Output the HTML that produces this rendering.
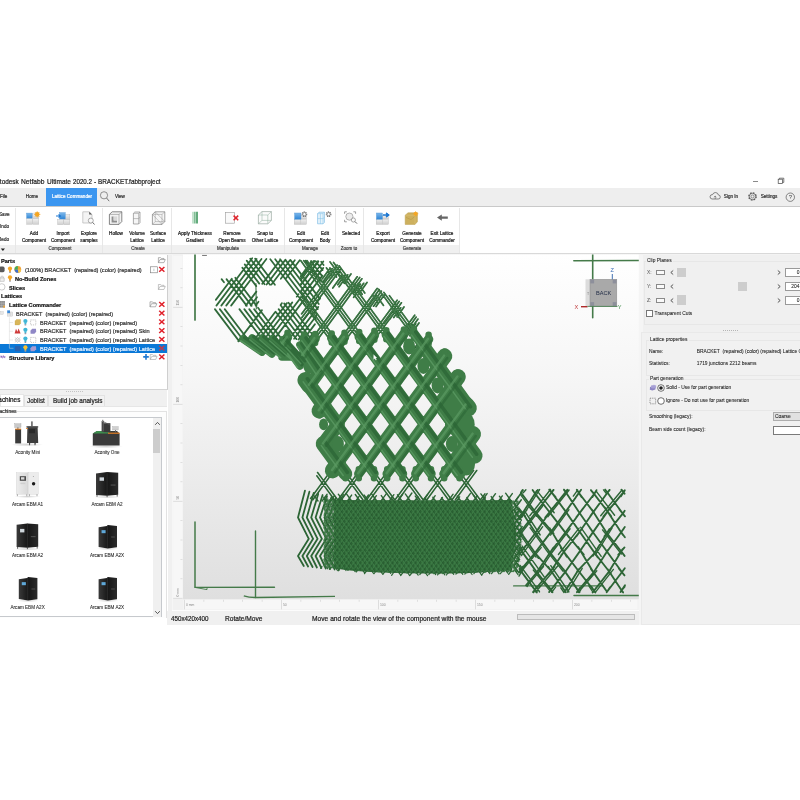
<!DOCTYPE html>
<html><head><meta charset="utf-8"><title>Autodesk Netfabb Ultimate 2020.2 - BRACKET.fabbproject</title>
<style>
html,body{margin:0;padding:0;background:#fff;}
body{width:800px;height:800px;position:relative;overflow:hidden;font-family:"Liberation Sans",sans-serif;}
.t{position:absolute;white-space:nowrap;line-height:1;-webkit-text-stroke:0.22px currentColor;}
.r{position:absolute;}
.rp .t{-webkit-text-stroke:0.07px currentColor;}
svg{overflow:visible}
</style></head><body><div id="app" style="position:absolute;left:0;top:0;width:800px;height:800px;will-change:transform;">
<div class="t" style="left:-8.3px;top:178px;font-size:7.6px;line-height:7.6px;color:#1a1a1a;font-weight:normal;transform-origin:0 50%;transform:scaleX(0.846);">Autodesk</div>
<div class="t" style="left:20.6px;top:178px;font-size:7.6px;line-height:7.6px;color:#1a1a1a;font-weight:normal;transform-origin:0 50%;transform:scaleX(0.879);">Netfabb</div>
<div class="t" style="left:46.5px;top:178px;font-size:7.6px;line-height:7.6px;color:#1a1a1a;font-weight:normal;transform-origin:0 50%;transform:scaleX(0.861);">Ultimate</div>
<div class="t" style="left:73px;top:178px;font-size:7.6px;line-height:7.6px;color:#1a1a1a;font-weight:normal;transform-origin:0 50%;transform:scaleX(0.818);">2020.2</div>
<div class="t" style="left:94.4px;top:178px;font-size:7.6px;line-height:7.6px;color:#1a1a1a;font-weight:normal;transform-origin:0 50%;transform:scaleX(0.869);">-</div>
<div class="t" style="left:98px;top:178px;font-size:7.6px;line-height:7.6px;color:#1a1a1a;font-weight:normal;transform-origin:0 50%;transform:scaleX(0.838);">BRACKET.fabbproject</div>
<div class="r" style="left:753.2px;top:180.7px;width:4.6px;height:0.7px;background:#8a8a8a;"></div>
<svg class="r" style="left:777px;top:177px" width="8" height="8" viewBox="0 0 8 8"><rect x="1.2" y="2.2" width="4.4" height="4.4" fill="none" stroke="#444" stroke-width="0.7"/><path d="M2.4 2.2 V1.2 H6.8 V5.4 H5.6" fill="none" stroke="#444" stroke-width="0.7"/></svg>
<div class="r" style="left:0px;top:187.5px;width:800px;height:18.2px;background:#eeeeee;"></div>
<div class="r" style="left:0px;top:205.5px;width:800px;height:0.8px;background:#c9c9c9;"></div>
<div class="r" style="left:46.3px;top:187.5px;width:50.4px;height:18.2px;background:#3b96f0;"></div>
<div class="t" style="left:0.2px;top:194px;font-size:5px;line-height:5px;color:#333;font-weight:normal;transform-origin:0 50%;transform:scaleX(0.92);">File</div>
<div class="t" style="left:31.5px;top:194px;font-size:5px;line-height:5px;color:#333;font-weight:normal;transform-origin:50% 50%;transform:translateX(-50%) scaleX(0.92);">Home</div>
<div class="t" style="left:71.5px;top:194px;font-size:5px;line-height:5px;color:#fff;font-weight:normal;transform-origin:50% 50%;transform:translateX(-50%) scaleX(0.92);">Lattice Commander</div>
<div class="t" style="left:120px;top:194px;font-size:5px;line-height:5px;color:#333;font-weight:normal;transform-origin:50% 50%;transform:translateX(-50%) scaleX(0.92);">View</div>
<svg class="r" style="left:99px;top:190px" width="12" height="13" viewBox="0 0 12 13"><circle cx="5" cy="5.3" r="3.6" fill="none" stroke="#666" stroke-width="0.7"/><path d="M7.6 8 L10.2 11.2" stroke="#666" stroke-width="0.9"/></svg>
<svg class="r" style="left:709px;top:191px" width="12" height="10" viewBox="0 0 12 10"><path d="M3 8 H9.2 A2 2 0 0 0 9.4 4 A3 3 0 0 0 3.6 3.6 A2.2 2.2 0 0 0 3 8 Z" fill="none" stroke="#555" stroke-width="0.7"/><path d="M6.2 8 V5 M5 6.2 L6.2 5 L7.4 6.2" fill="none" stroke="#555" stroke-width="0.6"/></svg>
<div class="t" style="left:731px;top:194px;font-size:5px;line-height:5px;color:#333;font-weight:normal;transform-origin:50% 50%;transform:translateX(-50%) scaleX(0.92);">Sign In</div>
<svg class="r" style="left:747px;top:191px" width="11" height="11" viewBox="0 0 11 11"><circle cx="5.5" cy="5.5" r="3.7" fill="none" stroke="#555" stroke-width="1.2" stroke-dasharray="1.6 1.3"/><circle cx="5.5" cy="5.5" r="3.2" fill="none" stroke="#555" stroke-width="0.7"/><circle cx="5.5" cy="5.5" r="1.5" fill="none" stroke="#555" stroke-width="0.6"/></svg>
<div class="t" style="left:768.5px;top:194px;font-size:5px;line-height:5px;color:#333;font-weight:normal;transform-origin:50% 50%;transform:translateX(-50%) scaleX(0.92);">Settings</div>
<svg class="r" style="left:785px;top:191.5px" width="11" height="11" viewBox="0 0 11 11"><circle cx="5.3" cy="5.2" r="4.2" fill="none" stroke="#555" stroke-width="0.7"/><text x="5.3" y="7.4" font-size="6" text-anchor="middle" fill="#444" font-family="Liberation Sans, sans-serif">?</text></svg>
<div class="r" style="left:0px;top:245px;width:459.5px;height:8px;background:#f0f0f0;"></div>
<div class="r" style="left:0px;top:253px;width:800px;height:1px;background:#d9d9d9;"></div>
<div class="r" style="left:0px;top:254px;width:800px;height:0.8px;background:#f3f3f3;"></div>
<div class="r" style="left:15.2px;top:207.5px;width:0.8px;height:45px;background:#e7e7e7;"></div>
<div class="r" style="left:102.1px;top:207.5px;width:0.8px;height:45px;background:#e7e7e7;"></div>
<div class="r" style="left:171.29999999999998px;top:207.5px;width:0.8px;height:45px;background:#e7e7e7;"></div>
<div class="r" style="left:283.6px;top:207.5px;width:0.8px;height:45px;background:#e7e7e7;"></div>
<div class="r" style="left:334.6px;top:207.5px;width:0.8px;height:45px;background:#e7e7e7;"></div>
<div class="r" style="left:363.3px;top:207.5px;width:0.8px;height:45px;background:#e7e7e7;"></div>
<div class="r" style="left:459.1px;top:207.5px;width:0.8px;height:45px;background:#e7e7e7;"></div>
<div class="t" style="left:-0.6px;top:212px;font-size:5px;line-height:5px;color:#333;font-weight:normal;transform-origin:0 50%;transform:scaleX(0.92);">Save</div>
<div class="t" style="left:-1.6px;top:224px;font-size:5px;line-height:5px;color:#333;font-weight:normal;transform-origin:0 50%;transform:scaleX(0.92);">Undo</div>
<div class="t" style="left:-1.6px;top:237px;font-size:5px;line-height:5px;color:#333;font-weight:normal;transform-origin:0 50%;transform:scaleX(0.92);">Redo</div>
<svg class="r" style="left:-0.5px;top:247.8px" width="6" height="4" viewBox="0 0 6 4"><path d="M0.8 0.6 L5 0.6 L2.9 3 Z" fill="#222"/></svg>
<div class="t" style="left:33.5px;top:231px;font-size:5px;line-height:5px;color:#1c1c1c;font-weight:normal;transform-origin:50% 50%;transform:translateX(-50%) scaleX(0.93);">Add</div>
<div class="t" style="left:33.5px;top:238px;font-size:5px;line-height:5px;color:#1c1c1c;font-weight:normal;transform-origin:50% 50%;transform:translateX(-50%) scaleX(0.93);">Component</div>
<div class="t" style="left:63px;top:231px;font-size:5px;line-height:5px;color:#1c1c1c;font-weight:normal;transform-origin:50% 50%;transform:translateX(-50%) scaleX(0.93);">Import</div>
<div class="t" style="left:63px;top:238px;font-size:5px;line-height:5px;color:#1c1c1c;font-weight:normal;transform-origin:50% 50%;transform:translateX(-50%) scaleX(0.93);">Component</div>
<div class="t" style="left:89px;top:231px;font-size:5px;line-height:5px;color:#1c1c1c;font-weight:normal;transform-origin:50% 50%;transform:translateX(-50%) scaleX(0.93);">Explore</div>
<div class="t" style="left:89px;top:238px;font-size:5px;line-height:5px;color:#1c1c1c;font-weight:normal;transform-origin:50% 50%;transform:translateX(-50%) scaleX(0.93);">samples</div>
<div class="t" style="left:115.5px;top:231px;font-size:5px;line-height:5px;color:#1c1c1c;font-weight:normal;transform-origin:50% 50%;transform:translateX(-50%) scaleX(0.93);">Hollow</div>
<div class="t" style="left:136.5px;top:231px;font-size:5px;line-height:5px;color:#1c1c1c;font-weight:normal;transform-origin:50% 50%;transform:translateX(-50%) scaleX(0.93);">Volume</div>
<div class="t" style="left:136.5px;top:238px;font-size:5px;line-height:5px;color:#1c1c1c;font-weight:normal;transform-origin:50% 50%;transform:translateX(-50%) scaleX(0.93);">Lattice</div>
<div class="t" style="left:158px;top:231px;font-size:5px;line-height:5px;color:#1c1c1c;font-weight:normal;transform-origin:50% 50%;transform:translateX(-50%) scaleX(0.93);">Surface</div>
<div class="t" style="left:158px;top:238px;font-size:5px;line-height:5px;color:#1c1c1c;font-weight:normal;transform-origin:50% 50%;transform:translateX(-50%) scaleX(0.93);">Lattice</div>
<div class="t" style="left:195px;top:231px;font-size:5px;line-height:5px;color:#1c1c1c;font-weight:normal;transform-origin:50% 50%;transform:translateX(-50%) scaleX(0.93);">Apply Thickness</div>
<div class="t" style="left:195px;top:238px;font-size:5px;line-height:5px;color:#1c1c1c;font-weight:normal;transform-origin:50% 50%;transform:translateX(-50%) scaleX(0.93);">Gradient</div>
<div class="t" style="left:231.5px;top:231px;font-size:5px;line-height:5px;color:#1c1c1c;font-weight:normal;transform-origin:50% 50%;transform:translateX(-50%) scaleX(0.93);">Remove</div>
<div class="t" style="left:231.5px;top:238px;font-size:5px;line-height:5px;color:#1c1c1c;font-weight:normal;transform-origin:50% 50%;transform:translateX(-50%) scaleX(0.93);">Open Beams</div>
<div class="t" style="left:265px;top:231px;font-size:5px;line-height:5px;color:#1c1c1c;font-weight:normal;transform-origin:50% 50%;transform:translateX(-50%) scaleX(0.93);">Snap to</div>
<div class="t" style="left:265px;top:238px;font-size:5px;line-height:5px;color:#1c1c1c;font-weight:normal;transform-origin:50% 50%;transform:translateX(-50%) scaleX(0.93);">Other Lattice</div>
<div class="t" style="left:301.2px;top:231px;font-size:5px;line-height:5px;color:#1c1c1c;font-weight:normal;transform-origin:50% 50%;transform:translateX(-50%) scaleX(0.93);">Edit</div>
<div class="t" style="left:301.2px;top:238px;font-size:5px;line-height:5px;color:#1c1c1c;font-weight:normal;transform-origin:50% 50%;transform:translateX(-50%) scaleX(0.93);">Component</div>
<div class="t" style="left:324.5px;top:231px;font-size:5px;line-height:5px;color:#1c1c1c;font-weight:normal;transform-origin:50% 50%;transform:translateX(-50%) scaleX(0.93);">Edit</div>
<div class="t" style="left:324.5px;top:238px;font-size:5px;line-height:5px;color:#1c1c1c;font-weight:normal;transform-origin:50% 50%;transform:translateX(-50%) scaleX(0.93);">Body</div>
<div class="t" style="left:350.7px;top:231px;font-size:5px;line-height:5px;color:#1c1c1c;font-weight:normal;transform-origin:50% 50%;transform:translateX(-50%) scaleX(0.93);">Selected</div>
<div class="t" style="left:382.5px;top:231px;font-size:5px;line-height:5px;color:#1c1c1c;font-weight:normal;transform-origin:50% 50%;transform:translateX(-50%) scaleX(0.93);">Export</div>
<div class="t" style="left:382.5px;top:238px;font-size:5px;line-height:5px;color:#1c1c1c;font-weight:normal;transform-origin:50% 50%;transform:translateX(-50%) scaleX(0.93);">Component</div>
<div class="t" style="left:412px;top:231px;font-size:5px;line-height:5px;color:#1c1c1c;font-weight:normal;transform-origin:50% 50%;transform:translateX(-50%) scaleX(0.93);">Generate</div>
<div class="t" style="left:412px;top:238px;font-size:5px;line-height:5px;color:#1c1c1c;font-weight:normal;transform-origin:50% 50%;transform:translateX(-50%) scaleX(0.93);">Component</div>
<div class="t" style="left:442px;top:231px;font-size:5px;line-height:5px;color:#1c1c1c;font-weight:normal;transform-origin:50% 50%;transform:translateX(-50%) scaleX(0.93);">Exit Lattice</div>
<div class="t" style="left:442px;top:238px;font-size:5px;line-height:5px;color:#1c1c1c;font-weight:normal;transform-origin:50% 50%;transform:translateX(-50%) scaleX(0.93);">Commander</div>
<div class="t" style="left:60px;top:247px;font-size:4.8px;line-height:4.8px;color:#444;font-weight:normal;transform-origin:50% 50%;transform:translateX(-50%) scaleX(0.93);">Component</div>
<div class="t" style="left:137.5px;top:247px;font-size:4.8px;line-height:4.8px;color:#444;font-weight:normal;transform-origin:50% 50%;transform:translateX(-50%) scaleX(0.93);">Create</div>
<div class="t" style="left:228px;top:247px;font-size:4.8px;line-height:4.8px;color:#444;font-weight:normal;transform-origin:50% 50%;transform:translateX(-50%) scaleX(0.93);">Manipulate</div>
<div class="t" style="left:310px;top:247px;font-size:4.8px;line-height:4.8px;color:#444;font-weight:normal;transform-origin:50% 50%;transform:translateX(-50%) scaleX(0.93);">Manage</div>
<div class="t" style="left:349px;top:247px;font-size:4.8px;line-height:4.8px;color:#444;font-weight:normal;transform-origin:50% 50%;transform:translateX(-50%) scaleX(0.93);">Zoom to</div>
<div class="t" style="left:412px;top:247px;font-size:4.8px;line-height:4.8px;color:#444;font-weight:normal;transform-origin:50% 50%;transform:translateX(-50%) scaleX(0.93);">Generate</div>
<svg class="r" style="left:0;top:0" width="800" height="800" viewBox="0 0 800 800">
<defs>
<linearGradient id="cb" x1="0" y1="0" x2="0" y2="1"><stop offset="0" stop-color="#7db7ea"/><stop offset="1" stop-color="#2f86d6"/></linearGradient>
<linearGradient id="cg" x1="0" y1="0" x2="0" y2="1"><stop offset="0" stop-color="#f1f1f1"/><stop offset="1" stop-color="#cfcfcf"/></linearGradient>
</defs>
<rect x="26.6" y="213.1" width="6.0" height="5.5" fill="url(#cb)" stroke="#4a93d8" stroke-width="0.4"/>
<rect x="26.6" y="218.79999999999998" width="6.0" height="5.5" fill="url(#cg)" stroke="#bdbdbd" stroke-width="0.4"/>
<rect x="32.800000000000004" y="213.1" width="6.0" height="5.5" fill="url(#cg)" stroke="#bdbdbd" stroke-width="0.4"/>
<rect x="32.800000000000004" y="218.79999999999998" width="6.0" height="5.5" fill="url(#cg)" stroke="#bdbdbd" stroke-width="0.4"/>
<circle cx="37.2" cy="214.4" r="2.3" fill="#f5a623"/><path d="M37.2 211.2 V217.6 M34 214.4 H40.4 M35 212.2 L39.4 216.6 M39.4 212.2 L35 216.6" stroke="#f5a623" stroke-width="0.7"/>
<rect x="57.6" y="219.2" width="6.0" height="5.5" fill="url(#cg)" stroke="#b8b8b8" stroke-width="0.4"/>
<rect x="63.8" y="219.2" width="6.0" height="5.5" fill="url(#cg)" stroke="#b8b8b8" stroke-width="0.4"/>
<rect x="63.8" y="214.4" width="6.0" height="4.8" fill="url(#cg)" stroke="#b8b8b8" stroke-width="0.4"/>
<rect x="59.6" y="212.6" width="5.6" height="6.4" fill="url(#cb)" stroke="#4a93d8" stroke-width="0.4"/>
<path d="M56 216 H60.2 M58.6 214.4 L60.4 216 L58.6 217.6" stroke="#1f78d1" stroke-width="1.1" fill="none"/>
<path d="M82.8 211.8 H89.2 L92 214.6 V223 H82.8 Z" fill="#f4f4f4" stroke="#a8a8a8" stroke-width="0.6"/><path d="M89.2 211.8 V214.6 H92 Z" fill="#555"/>
<circle cx="90.8" cy="220.6" r="2.5" fill="#fafafa" stroke="#777" stroke-width="0.6"/><path d="M92.6 222.5 L94.6 224.4" stroke="#555" stroke-width="0.9"/>
<path d="M109.4 214.4 L112.2 211.8 H121.8 V221.6 L119 224.4 H109.4 Z" fill="#f3f3f3" stroke="#555" stroke-width="0.7" stroke-linejoin="round"/>
<path d="M109.4 214.4 H119 V224.4 M119 214.4 L121.8 211.8" fill="none" stroke="#777" stroke-width="0.5"/>
<path d="M111.6 216.4 H113.6 V220.4 H117 V222.4 H111.6 Z" fill="#8e8e8e"/><rect x="113.6" y="216.4" width="3.6" height="4" fill="#d9d9d9"/>
<path d="M133.4 213.4 L134.8 212 H140 V222.6 L138.6 224 H133.4 Z" fill="#f6f6f6" stroke="#777" stroke-width="0.6"/>
<path d="M133.4 213.4 H138.6 V224 M138.6 213.4 L140 212 M133.4 218.6 H138.6 L140 217.4" fill="none" stroke="#888" stroke-width="0.5"/>
<path d="M152.4 214.4 L155.2 211.8 H164.8 V221.6 L162 224.4 H152.4 Z" fill="#f6f6f6" stroke="#666" stroke-width="0.6" stroke-linejoin="round"/>
<path d="M152.4 214.4 H162 V224.4 M162 214.4 L164.8 211.8 M152.4 214.4 L162 224.4 M155.2 211.8 L164.8 221.6 M155.2 211.8 V221.6 H164.8 M152.4 224.4 L155.2 221.6" fill="none" stroke="#888" stroke-width="0.45"/>
<path d="M193 211.8 V223.6" stroke="#58b074" stroke-width="0.7"/><path d="M194.9 211.8 V223.6" stroke="#3f9c5e" stroke-width="1.1"/><path d="M197 211.8 V223.6" stroke="#2f8f50" stroke-width="1.5"/>
<rect x="225.4" y="212.6" width="9.2" height="10.6" fill="#fafafa" stroke="#9a9a9a" stroke-width="0.6"/>
<path d="M233.6 215.6 L238.2 220.2 M238.2 215.6 L233.6 220.2" stroke="#e0242c" stroke-width="1.5"/>
<path d="M258.4 215 L262 211.6 H271.4 V220.4 L267.8 223.8 H258.4 Z" fill="#fbfbfb" stroke="#8a9a92" stroke-width="0.6" stroke-linejoin="round"/>
<path d="M258.4 215 H267.8 V223.8 M267.8 215 L271.4 211.6 M262 211.6 V220.4 H271.4 M258.4 223.8 L262 220.4" fill="none" stroke="#8fae9c" stroke-width="0.5"/>
<rect x="294.2" y="219.0" width="6.0" height="5.3" fill="url(#cg)" stroke="#b8b8b8" stroke-width="0.4"/>
<rect x="300.4" y="219.0" width="6.0" height="5.3" fill="url(#cg)" stroke="#b8b8b8" stroke-width="0.4"/>
<rect x="300.4" y="215.4" width="6.0" height="3.6" fill="url(#cg)" stroke="#b8b8b8" stroke-width="0.4"/>
<rect x="294.6" y="213.0" width="6.4" height="6.2" fill="url(#cb)" stroke="#4a93d8" stroke-width="0.4"/>
<circle cx="304.4" cy="214.2" r="2.1" fill="none" stroke="#777" stroke-width="1.5" stroke-dasharray="1 0.65"/><circle cx="304.4" cy="214.2" r="1.7" fill="#fafafa" stroke="#777" stroke-width="0.8"/>
<path d="M317.6 213.6 L319 212.2 H324.4 V222.4 L323 223.8 H317.6 Z" fill="#e6f3fb" stroke="#6db4e0" stroke-width="0.6"/>
<path d="M317.6 213.6 H323 V223.8 M323 213.6 L324.4 212.2 M317.6 218.6 H323 L324.4 217.4 M320.4 213.6 V223.8" fill="none" stroke="#7fc0e6" stroke-width="0.5"/>
<circle cx="328.6" cy="214.2" r="2.1" fill="none" stroke="#777" stroke-width="1.5" stroke-dasharray="1 0.65"/><circle cx="328.6" cy="214.2" r="1.7" fill="#fafafa" stroke="#777" stroke-width="0.8"/>
<path d="M344.6 213.8 V211.8 H346.8 M353.4 211.8 H355.6 V213.8 M344.6 219.8 V221.8 H346.8" fill="none" stroke="#777" stroke-width="0.7"/>
<circle cx="349.4" cy="216.6" r="3.6" fill="#ececec" stroke="#888" stroke-width="0.6"/><circle cx="353.4" cy="220" r="2.1" fill="#fafafa" stroke="#777" stroke-width="0.6"/><path d="M355 221.6 L357 223.6" stroke="#555" stroke-width="0.9"/>
<rect x="376.2" y="219.0" width="6.0" height="5.3" fill="url(#cg)" stroke="#b8b8b8" stroke-width="0.4"/>
<rect x="382.4" y="219.0" width="6.0" height="5.3" fill="url(#cg)" stroke="#b8b8b8" stroke-width="0.4"/>
<rect x="382.4" y="215.6" width="6.0" height="3.4" fill="url(#cg)" stroke="#b8b8b8" stroke-width="0.4"/>
<rect x="376.4" y="213.0" width="6.0" height="6.2" fill="url(#cb)" stroke="#4a93d8" stroke-width="0.4"/>
<path d="M383 215 H387.6 M386 213 L388.6 215 L386 217" stroke="#1f78d1" stroke-width="1.3" fill="none"/><path d="M386.4 212.6 L389.6 215 L386.4 217.4 Z" fill="#1f78d1"/>
<path d="M405.2 215.2 L408 212.8 H417.4 V221.8 L415 224.4 H405.2 Z" fill="#cdb05e" stroke="#b89a48" stroke-width="0.5" stroke-linejoin="round"/>
<path d="M405.2 215.2 H415 V224.4 M415 215.2 L417.4 212.8" fill="none" stroke="#ddc57a" stroke-width="0.5"/><path d="M406 217.4 L411 219.6 L414.6 216.6" fill="none" stroke="#b39443" stroke-width="0.5"/>
<circle cx="415.6" cy="213.8" r="1.9" fill="#f5a623"/><path d="M415.6 211 V216.6 M412.8 213.8 H418.4 M413.8 212 L417.4 215.6 M417.4 212 L413.8 215.6" stroke="#f5a623" stroke-width="0.6"/>
<path d="M437 217.6 L441.8 214.4 V216.5 H447.8 V218.7 H441.8 V220.8 Z" fill="#666"/>
</svg>
<div class="r" style="left:0px;top:254.8px;width:168px;height:135.5px;background:#fff;border-right:0.8px solid #cfcfcf;border-bottom:0.8px solid #d5d5d5;box-sizing:border-box"></div>
<div class="r" style="left:168px;top:254.8px;width:4.4px;height:370px;background:#f0f0f0;"></div>
<div class="r" style="left:0px;top:344.2px;width:166.5px;height:8.8px;background:#0a78d7;"></div>
<div class="t" style="left:1px;top:258px;font-size:6.2px;line-height:6.2px;color:#111;font-weight:bold;transform-origin:0 50%;transform:scaleX(0.905);">Parts</div>
<div class="t" style="left:25px;top:267px;font-size:6.2px;line-height:6.2px;color:#333;font-weight:normal;transform-origin:0 50%;transform:scaleX(0.905);">(100%) BRACKET&nbsp; (repaired) (color) (repaired)</div>
<div class="t" style="left:15px;top:276px;font-size:6.2px;line-height:6.2px;color:#111;font-weight:bold;transform-origin:0 50%;transform:scaleX(0.905);">No-Build Zones</div>
<div class="t" style="left:8.5px;top:285px;font-size:6.2px;line-height:6.2px;color:#111;font-weight:bold;transform-origin:0 50%;transform:scaleX(0.905);">Slices</div>
<div class="t" style="left:1px;top:293px;font-size:6.2px;line-height:6.2px;color:#111;font-weight:bold;transform-origin:0 50%;transform:scaleX(0.905);">Lattices</div>
<div class="t" style="left:8.5px;top:302px;font-size:6.2px;line-height:6.2px;color:#111;font-weight:bold;transform-origin:0 50%;transform:scaleX(0.905);">Lattice Commander</div>
<div class="t" style="left:16px;top:311px;font-size:6.2px;line-height:6.2px;color:#333;font-weight:normal;transform-origin:0 50%;transform:scaleX(0.905);">BRACKET&nbsp; (repaired) (color) (repaired)</div>
<div class="t" style="left:40px;top:320px;font-size:6.2px;line-height:6.2px;color:#333;font-weight:normal;transform-origin:0 50%;transform:scaleX(0.905);">BRACKET&nbsp; (repaired) (color) (repaired)</div>
<div class="t" style="left:40px;top:328px;font-size:6.2px;line-height:6.2px;color:#333;font-weight:normal;transform-origin:0 50%;transform:scaleX(0.905);">BRACKET&nbsp; (repaired) (color) (repaired) Skin</div>
<div class="t" style="left:40px;top:337px;font-size:6.2px;line-height:6.2px;color:#333;font-weight:normal;transform-origin:0 50%;transform:scaleX(0.905);">BRACKET&nbsp; (repaired) (color) (repaired) Lattice</div>
<div class="t" style="left:40px;top:346px;font-size:6.2px;line-height:6.2px;color:#e8f2ff;font-weight:normal;transform-origin:0 50%;transform:scaleX(0.905);">BRACKET&nbsp; (repaired) (color) (repaired) Lattice</div>
<div class="t" style="left:8.5px;top:355px;font-size:6.2px;line-height:6.2px;color:#111;font-weight:bold;transform-origin:0 50%;transform:scaleX(0.905);">Structure Library</div>
<svg class="r" style="left:0;top:0" width="800" height="800" viewBox="0 0 800 800">
<path d="M158.4 262.65 V257.65 H160.6 L161.4 258.45 H164.0 V259.45 M158.4 262.65 L160.0 259.55 H165.3 L163.9 262.65 Z" fill="#fdfdfd" stroke="#777" stroke-width="0.55" stroke-linejoin="round"/>
<rect x="-1" y="266.6" width="5.6" height="5.6" rx="1.6" fill="#5a5a5a"/>
<circle cx="10" cy="268.5" r="2.1" fill="#f5a728"/><path d="M8.9 270.09999999999997 H11.1 L10.8 271.9 H9.2 Z" fill="#f5a728"/><rect x="9.2" y="271.7" width="1.6" height="1.3" fill="#9a9aa8"/>
<circle cx="17.8" cy="269.4" r="3.4" fill="#f1a33a"/><path d="M17.8 269.4 L17.8 266.0 A3.4 3.4 0 0 0 14.5 269.8 Z" fill="#3fae58"/><path d="M17.8 269.4 L14.5 269.8 A3.4 3.4 0 0 0 18.6 272.7 Z" fill="#3b6fd0"/><path d="M17.8 269.4 L18.6 272.7 A3.4 3.4 0 0 0 21.2 269.6 Z" fill="#f2c84b"/>
<rect x="150.4" y="266.8" width="7" height="6" fill="#fff" stroke="#777" stroke-width="0.6"/><path d="M153.9 268.6 V271.0" stroke="#9aa" stroke-width="0.6"/>
<path d="M159.20000000000002 267.0 L164.4 271.79999999999995 M164.4 267.0 L159.20000000000002 271.79999999999995" stroke="#e0202a" stroke-width="1.5" fill="none"/>
<path d="M0 281.35 V277.95 H4.2 V281.35 Z M0.8 277.95 V276.75 Q2 275.15 3.4 276.75 V277.95" fill="#f0f0f0" stroke="#b5b5b5" stroke-width="0.6"/>
<circle cx="10" cy="277.25" r="2.1" fill="#f5a728"/><path d="M8.9 278.84999999999997 H11.1 L10.8 280.65 H9.2 Z" fill="#f5a728"/><rect x="9.2" y="280.45" width="1.6" height="1.3" fill="#9a9aa8"/>
<circle cx="1.8" cy="286.9" r="3.2" fill="#fff" stroke="#aaa" stroke-width="0.6"/>
<path d="M158.4 289.49999999999994 V284.49999999999994 H160.6 L161.4 285.29999999999995 H164.0 V286.29999999999995 M158.4 289.49999999999994 L160.0 286.4 H165.3 L163.9 289.49999999999994 Z" fill="#fdfdfd" stroke="#999" stroke-width="0.55" stroke-linejoin="round"/>
<rect x="-0.5" y="301.0" width="5.4" height="6.6" fill="#8a8a8a"/><path d="M1.3 301.0 V307.6 M3.1 301.0 V307.6 M-0.5 303.2 H4.9 M-0.5 305.4 H4.9" stroke="#c9c9c9" stroke-width="0.4"/><rect x="3.2" y="305.6" width="1.8" height="2" fill="#e8a33a"/>
<path d="M150.0 306.79999999999995 V301.79999999999995 H152.2 L153.0 302.59999999999997 H155.6 V303.59999999999997 M150.0 306.79999999999995 L151.6 303.7 H156.9 L155.5 306.79999999999995 Z" fill="#fdfdfd" stroke="#777" stroke-width="0.55" stroke-linejoin="round"/>
<path d="M159.20000000000002 302.0 L164.4 306.79999999999995 M164.4 302.0 L159.20000000000002 306.79999999999995" stroke="#e0202a" stroke-width="1.5" fill="none"/>
<rect x="0.6" y="311.75" width="2.6" height="2.6" fill="#e6e6e6" stroke="#c2c2c2" stroke-width="0.4"/>
<rect x="7.2" y="310.35" width="2.8" height="3" fill="#3c8ad8"/><rect x="7.2" y="313.55" width="2.8" height="2.6" fill="#e4e4e4" stroke="#b8b8b8" stroke-width="0.3"/><rect x="10.2" y="311.95" width="2.6" height="4.2" fill="#e4e4e4" stroke="#b8b8b8" stroke-width="0.3"/>
<path d="M159.20000000000002 310.75 L164.4 315.54999999999995 M164.4 310.75 L159.20000000000002 315.54999999999995" stroke="#e0202a" stroke-width="1.5" fill="none"/>
<path d="M9.4 317.25 V348.25 H13.5 M9.4 322.5 H13 M9.4 331.25 H13 M9.4 340.0 H13" stroke="#d6d6d6" stroke-width="0.5" fill="none"/>
<path d="M15 320.9 L16.4 319.5 H20.6 V323.5 L19.2 324.9 H15 Z" fill="#d9b65a" stroke="#c3a046" stroke-width="0.3"/>
<circle cx="25.4" cy="321.0" r="2.1" fill="#3fb6d6"/><path d="M24.299999999999997 322.59999999999997 H26.5 L26.2 324.4 H24.599999999999998 Z" fill="#3fb6d6"/><rect x="24.599999999999998" y="324.2" width="1.6" height="1.3" fill="#9a9aa8"/>
<rect x="30.6" y="319.9" width="5.2" height="5" fill="none" stroke="#8a8a8a" stroke-width="0.5" stroke-dasharray="1.1 0.9"/>
<path d="M159.20000000000002 319.5 L164.4 324.29999999999995 M164.4 319.5 L159.20000000000002 324.29999999999995" stroke="#e0202a" stroke-width="1.5" fill="none"/>
<path d="M14.6 333.45 L16 328.65 L17.4 331.65 L18.6 328.45 L20.6 333.45 Z" fill="#cf3a3a"/>
<circle cx="25.4" cy="329.75" r="2.1" fill="#3fb6d6"/><path d="M24.299999999999997 331.34999999999997 H26.5 L26.2 333.15 H24.599999999999998 Z" fill="#3fb6d6"/><rect x="24.599999999999998" y="332.95" width="1.6" height="1.3" fill="#9a9aa8"/>
<path d="M30.4 330.65 L32.2 328.65 H36 L36.2 331.85 L34.4 333.65 H30.6 Z" fill="#8f87c6"/>
<path d="M159.20000000000002 328.25 L164.4 333.04999999999995 M164.4 328.25 L159.20000000000002 333.04999999999995" stroke="#e0202a" stroke-width="1.5" fill="none"/>
<path d="M14.8 337.4 L20.4 342.4 M14.8 339.8 L17.8 342.4 M17.4 337.4 L20.4 340.2 M20.4 337.4 L14.8 342.4 M17.8 337.4 L14.8 340.2 M20.4 339.8 L17.4 342.4" stroke="#aaa" stroke-width="0.5" fill="none"/>
<circle cx="25.4" cy="338.5" r="2.1" fill="#3fb6d6"/><path d="M24.299999999999997 340.09999999999997 H26.5 L26.2 341.9 H24.599999999999998 Z" fill="#3fb6d6"/><rect x="24.599999999999998" y="341.7" width="1.6" height="1.3" fill="#9a9aa8"/>
<rect x="30.6" y="337.4" width="5.2" height="5" fill="none" stroke="#8a8a8a" stroke-width="0.5" stroke-dasharray="1.1 0.9"/>
<path d="M159.20000000000002 337.0 L164.4 341.79999999999995 M164.4 337.0 L159.20000000000002 341.79999999999995" stroke="#e0202a" stroke-width="1.5" fill="none"/>
<path d="M15 346.15 H20.4 V351.15 H15 Z" fill="#2c5fa8" opacity="0.9"/>
<circle cx="25.4" cy="347.25" r="2.1" fill="#f7c232"/><path d="M24.299999999999997 348.84999999999997 H26.5 L26.2 350.65 H24.599999999999998 Z" fill="#f7c232"/><rect x="24.599999999999998" y="350.45" width="1.6" height="1.3" fill="#9a9aa8"/>
<path d="M30.4 348.15 L32.2 346.15 H36 L36.2 349.35 L34.4 351.15 H30.6 Z" fill="#a79ad0"/>
<path d="M159.20000000000002 345.75 L164.4 350.55 M164.4 345.75 L159.20000000000002 350.55" stroke="#c23a4a" stroke-width="1.5" fill="none"/>
<path d="M0 356.9 H5.6 M1 355.5 L2.4 358.3 M3.2 355.3 L4.6 358.1" stroke="#7a4fb0" stroke-width="0.7" fill="none"/>
<path d="M146 354.1 V359.7 M143.2 356.9 H148.8" stroke="#1f78d1" stroke-width="1.6" fill="none"/>
<path d="M150.2 359.49999999999994 V354.49999999999994 H152.39999999999998 L153.2 355.29999999999995 H155.79999999999998 V356.29999999999995 M150.2 359.49999999999994 L151.79999999999998 356.4 H157.1 L155.7 359.49999999999994 Z" fill="#fdfdfd" stroke="#999" stroke-width="0.55" stroke-linejoin="round"/>
<path d="M159.20000000000002 354.5 L164.4 359.29999999999995 M164.4 354.5 L159.20000000000002 359.29999999999995" stroke="#e0202a" stroke-width="1.5" fill="none"/>
</svg>
<div class="r" style="left:0px;top:390.3px;width:167.3px;height:235px;background:#f0f0f0;"></div>
<div class="r" style="left:0px;top:617.8px;width:167.3px;height:8px;background:#ffffff;"></div>
<div class="r" style="left:0px;top:406px;width:167px;height:0.8px;background:#e6e6e6;"></div>
<div class="r" style="left:66px;top:391.4px;width:16.5px;height:0.8px;background:transparent;border-top:0.8px dotted #c4c4c4"></div>
<div class="r" style="left:0px;top:393.6px;width:24.3px;height:12.8px;background:#fff;border:0.8px solid #e6e6e6;border-bottom:none;box-sizing:border-box"></div>
<div class="r" style="left:24.3px;top:395px;width:23.5px;height:11px;background:#f2f2f2;border:0.8px solid #e2e2e2;border-bottom:none;box-sizing:border-box"></div>
<div class="r" style="left:47.8px;top:395px;width:57px;height:11px;background:#f2f2f2;border:0.8px solid #e2e2e2;border-bottom:none;box-sizing:border-box"></div>
<div class="t" style="left:-7.4px;top:396px;font-size:7.2px;line-height:7.2px;color:#111;font-weight:normal;transform-origin:0 50%;transform:scaleX(0.89);">Machines</div>
<div class="t" style="left:26.75px;top:397px;font-size:7.2px;line-height:7.2px;color:#222;font-weight:normal;transform-origin:0 50%;transform:scaleX(0.871);">Joblist</div>
<div class="t" style="left:53px;top:397px;font-size:7.2px;line-height:7.2px;color:#222;font-weight:normal;transform-origin:0 50%;transform:scaleX(0.891);">Build job analysis</div>
<div class="r" style="left:0px;top:406.8px;width:167px;height:211px;background:#fdfdfd;"></div>
<div class="r" style="left:16px;top:411.2px;width:150px;height:0.8px;background:#e2e2e2;"></div>
<div class="r" style="left:165.6px;top:411.2px;width:0.8px;height:207px;background:#e2e2e2;"></div>
<div class="t" style="left:-4.6px;top:410px;font-size:4.9px;line-height:4.9px;color:#333;font-weight:normal;">Machines</div>
<div class="r" style="left:-1px;top:417.4px;width:163.2px;height:200px;background:#fff;border:0.8px solid #c6c9cd;box-sizing:border-box"></div>
<div class="r" style="left:152.6px;top:418.2px;width:8.8px;height:198.4px;background:#f0f0f0;"></div>
<div class="r" style="left:153.4px;top:428.6px;width:7px;height:24px;background:#cdcdcd;"></div>
<svg class="r" style="left:153.5px;top:420.5px" width="7" height="5" viewBox="0 0 7 5"><path d="M1.2 3.8 L3.5 1.4 L5.8 3.8" fill="none" stroke="#444" stroke-width="0.9"/></svg>
<svg class="r" style="left:153.5px;top:609.5px" width="7" height="5" viewBox="0 0 7 5"><path d="M1.2 1.2 L3.5 3.6 L5.8 1.2" fill="none" stroke="#444" stroke-width="0.9"/></svg>
<div class="t" style="left:27.6px;top:451px;font-size:4.6px;line-height:4.6px;color:#2a2a2a;font-weight:normal;transform-origin:50% 50%;transform:translateX(-50%);-webkit-text-stroke:0.08px currentColor;">Aconity Mini</div>
<div class="t" style="left:107px;top:451px;font-size:4.6px;line-height:4.6px;color:#2a2a2a;font-weight:normal;transform-origin:50% 50%;transform:translateX(-50%);-webkit-text-stroke:0.08px currentColor;">Aconity One</div>
<div class="t" style="left:27.6px;top:503px;font-size:4.6px;line-height:4.6px;color:#2a2a2a;font-weight:normal;transform-origin:50% 50%;transform:translateX(-50%);-webkit-text-stroke:0.08px currentColor;">Arcam EBM A1</div>
<div class="t" style="left:107px;top:503px;font-size:4.6px;line-height:4.6px;color:#2a2a2a;font-weight:normal;transform-origin:50% 50%;transform:translateX(-50%);-webkit-text-stroke:0.08px currentColor;">Arcam EBM A2</div>
<div class="t" style="left:27.6px;top:554px;font-size:4.6px;line-height:4.6px;color:#2a2a2a;font-weight:normal;transform-origin:50% 50%;transform:translateX(-50%);-webkit-text-stroke:0.08px currentColor;">Arcam EBM A2</div>
<div class="t" style="left:107px;top:554px;font-size:4.6px;line-height:4.6px;color:#2a2a2a;font-weight:normal;transform-origin:50% 50%;transform:translateX(-50%);-webkit-text-stroke:0.08px currentColor;">Arcam EBM A2X</div>
<div class="t" style="left:27.6px;top:606px;font-size:4.6px;line-height:4.6px;color:#2a2a2a;font-weight:normal;transform-origin:50% 50%;transform:translateX(-50%);-webkit-text-stroke:0.08px currentColor;">Arcam EBM A2X</div>
<div class="t" style="left:107px;top:606px;font-size:4.6px;line-height:4.6px;color:#2a2a2a;font-weight:normal;transform-origin:50% 50%;transform:translateX(-50%);-webkit-text-stroke:0.08px currentColor;">Arcam EBM A2X</div>
<svg class="r" style="left:0;top:0" width="800" height="800" viewBox="0 0 800 800">
<defs><linearGradient id="blk" x1="0" y1="0" x2="1" y2="0"><stop offset="0" stop-color="#3a3a3a"/><stop offset="0.5" stop-color="#161616"/><stop offset="1" stop-color="#2b2b2b"/></linearGradient>
<linearGradient id="wht" x1="0" y1="0" x2="1" y2="0"><stop offset="0" stop-color="#ededed"/><stop offset="1" stop-color="#d9d9d9"/></linearGradient>
<radialGradient id="shd"><stop offset="0" stop-color="#000" stop-opacity="0.18"/><stop offset="1" stop-color="#000" stop-opacity="0"/></radialGradient></defs>
<ellipse cx="27" cy="444.6" rx="16" ry="2" fill="url(#shd)"/>
<rect x="14.8" y="423.8" width="6.2" height="3.6" fill="#c9c9c9" stroke="#8a8a8a" stroke-width="0.3"/><rect x="17.4" y="427.4" width="1" height="1.6" fill="#666"/>
<rect x="15.2" y="429" width="5.9" height="14.4" fill="#3b3b3b"/><rect x="15.2" y="428.6" width="5.9" height="1.1" fill="#e57f22"/>
<path d="M27.4 426.6 H37.6 L38.2 443 H35.8 L35.4 445.2 H34.6 L34.4 443 H30.2 L30 445.2 H29.2 L29 443 H27 Z" fill="#3d3d3d"/><rect x="31" y="421.4" width="1.8" height="5.4" fill="#777"/><rect x="26.4" y="426.2" width="11.8" height="1.4" fill="#555"/><rect x="29" y="429" width="6" height="4.2" fill="#2a2a2a"/><rect x="26.2" y="428" width="1.6" height="1" fill="#e57f22"/>
<ellipse cx="106" cy="446.4" rx="17" ry="2" fill="url(#shd)"/>
<path d="M92.8 433.4 L97 431 H117 L119.6 433.4 V445.4 H92.8 Z" fill="#3a3a3a"/><path d="M92.8 433.4 L97 431 H111 L108 433.4 Z" fill="#3c8f4e"/><rect x="108" y="432.6" width="11.6" height="1.2" fill="#e57f22"/>
<rect x="101.6" y="421" width="2.2" height="11" fill="#4a4a4a"/><rect x="103.6" y="423.2" width="6.8" height="9" fill="#3a3a3a"/><path d="M102 421 L110 425" stroke="#555" stroke-width="0.8"/><rect x="102" y="419.8" width="1.4" height="2" fill="#888"/>
<rect x="112.6" y="426.6" width="5.6" height="3.4" fill="#d0d0d0" stroke="#999" stroke-width="0.3"/><rect x="115" y="430" width="0.9" height="2.4" fill="#666"/>
<ellipse cx="27.4" cy="496.6" rx="13" ry="1.4" fill="url(#shd)"/>
<rect x="16.4" y="472.8" width="11.6" height="21.4" fill="url(#wht)" stroke="#c4c4c4" stroke-width="0.3"/><rect x="28.4" y="472.8" width="9.8" height="21.4" fill="#ececec" stroke="#c4c4c4" stroke-width="0.3"/>
<rect x="19.8" y="476.2" width="6.2" height="4.6" fill="#4a4a4a"/><rect x="21" y="477.2" width="3.4" height="2.4" fill="#d8d8d8"/><rect x="20.4" y="482.6" width="5" height="1.6" fill="#cfcfcf"/>
<circle cx="33.6" cy="483.8" r="1.7" fill="#1a1a1a"/><circle cx="33.4" cy="476.6" r="0.5" fill="#999"/>
<path d="M17.4 494.2 V496.2 M26.8 494.2 V496.2 M29.4 494.2 V496.2 M37 494.2 V496.2" stroke="#8a8a8a" stroke-width="0.7"/>
<ellipse cx="107.1" cy="497.0" rx="13.764" ry="1.4" fill="url(#shd)"/>
<path d="M96 473.4 L107.1 472 L118.2 472.8 V494.79999999999995 L107.1 495.79999999999995 L96 495.0 Z" fill="url(#blk)"/>
<path d="M107.1 472 V495.59999999999997" stroke="#4a4a4a" stroke-width="0.4"/>
<rect x="99.552" y="477.368" width="4.44" height="3.416" fill="#cfd6dc"/>
<rect x="110.652" y="484.688" width="4.8839999999999995" height="0.7" fill="#6a6a6a"/>
<path d="M97 495.0 V496.79999999999995 M107.1 495.59999999999997 V497.2 M117.2 494.79999999999995 V496.59999999999997" stroke="#222" stroke-width="0.7"/>
<ellipse cx="27.400000000000002" cy="549.0" rx="13.392000000000001" ry="1.4" fill="url(#shd)"/>
<path d="M16.6 524.8 L27.400000000000002 523.4 L38.2 524.1999999999999 V546.8 L27.400000000000002 547.8 L16.6 547.0 Z" fill="url(#blk)"/>
<path d="M27.400000000000002 523.4 V547.6" stroke="#4a4a4a" stroke-width="0.4"/>
<rect x="20.056" y="528.9" width="4.32" height="3.5000000000000004" fill="#cfd6dc"/>
<rect x="30.856" y="536.4" width="4.752000000000001" height="0.7" fill="#6a6a6a"/>
<path d="M17.6 547.0 V548.8 M27.400000000000002 547.6 V549.1999999999999 M37.2 546.8 V548.6" stroke="#222" stroke-width="0.7"/>
<ellipse cx="107.8" cy="548.8" rx="11.408" ry="1.2" fill="url(#shd)"/>
<path d="M98.6 527.2 L106.88 526 L107.8 525 L117.0 526 V547.1999999999999 L107.8 548.4 L98.6 547.0 Z" fill="url(#blk)"/>
<path d="M107.43199999999999 525.6 V548.0" stroke="#4a4a4a" stroke-width="0.4"/>
<rect x="101.544" y="530.148" width="4.048" height="3.042" fill="#5fa8d8"/>
<rect x="111.112" y="536.7" width="3.6799999999999997" height="0.6" fill="#6a6a6a"/>
<ellipse cx="28.1" cy="600.8" rx="11.532" ry="1.2" fill="url(#shd)"/>
<path d="M18.8 579.2 L27.17 578 L28.1 577 L37.400000000000006 578 V599.1999999999999 L28.1 600.4 L18.8 599.0 Z" fill="url(#blk)"/>
<path d="M27.728 577.6 V600.0" stroke="#4a4a4a" stroke-width="0.4"/>
<rect x="21.776" y="582.148" width="4.0920000000000005" height="3.042" fill="#5fa8d8"/>
<rect x="31.448" y="588.7" width="3.7200000000000006" height="0.6" fill="#6a6a6a"/>
<ellipse cx="107.8" cy="600.8" rx="11.408" ry="1.2" fill="url(#shd)"/>
<path d="M98.6 579.2 L106.88 578 L107.8 577 L117.0 578 V599.1999999999999 L107.8 600.4 L98.6 599.0 Z" fill="url(#blk)"/>
<path d="M107.43199999999999 577.6 V600.0" stroke="#4a4a4a" stroke-width="0.4"/>
<rect x="101.544" y="582.148" width="4.048" height="3.042" fill="#5fa8d8"/>
<rect x="111.112" y="588.7" width="3.6799999999999997" height="0.6" fill="#6a6a6a"/>
</svg>
<svg class="r" style="left:0;top:0" width="800" height="800" viewBox="0 0 800 800">
<defs>
<linearGradient id="bg" x1="0" y1="0" x2="0" y2="1"><stop offset="0" stop-color="#ffffff"/><stop offset="0.35" stop-color="#f6f6f6"/><stop offset="1" stop-color="#dfdfdf"/></linearGradient>
<clipPath id="vc"><rect x="183" y="254.6" width="455.8" height="344.6"/></clipPath>
</defs>
<rect x="172.4" y="254.6" width="466.4" height="355.6" fill="#f1f1f1"/>
<rect x="183" y="254.6" width="455.79999999999995" height="344.6" fill="url(#bg)"/>
<rect x="173.2" y="255.6" width="9.3" height="343" fill="#f7f7f7"/>
<rect x="183.5" y="599.8" width="454" height="9.6" fill="#f7f7f7"/>
<rect x="184.20" y="599.8" width="0.7" height="9.6" fill="#d2d2d2"/>
<text x="185.90" y="605.6" font-size="3.4" fill="#8a8a8a" font-family="Liberation Sans, sans-serif">0 mm</text>
<rect x="203.60" y="599.8" width="0.6" height="2" fill="#cfcfcf"/>
<rect x="223.00" y="599.8" width="0.6" height="2" fill="#cfcfcf"/>
<rect x="242.40" y="599.8" width="0.6" height="2" fill="#cfcfcf"/>
<rect x="261.80" y="599.8" width="0.6" height="2" fill="#cfcfcf"/>
<rect x="281.20" y="599.8" width="0.7" height="9.6" fill="#d2d2d2"/>
<text x="282.90" y="605.6" font-size="3.4" fill="#8a8a8a" font-family="Liberation Sans, sans-serif">50</text>
<rect x="300.60" y="599.8" width="0.6" height="2" fill="#cfcfcf"/>
<rect x="320.00" y="599.8" width="0.6" height="2" fill="#cfcfcf"/>
<rect x="339.40" y="599.8" width="0.6" height="2" fill="#cfcfcf"/>
<rect x="358.80" y="599.8" width="0.6" height="2" fill="#cfcfcf"/>
<rect x="378.20" y="599.8" width="0.7" height="9.6" fill="#d2d2d2"/>
<text x="379.90" y="605.6" font-size="3.4" fill="#8a8a8a" font-family="Liberation Sans, sans-serif">100</text>
<rect x="397.60" y="599.8" width="0.6" height="2" fill="#cfcfcf"/>
<rect x="417.00" y="599.8" width="0.6" height="2" fill="#cfcfcf"/>
<rect x="436.40" y="599.8" width="0.6" height="2" fill="#cfcfcf"/>
<rect x="455.80" y="599.8" width="0.6" height="2" fill="#cfcfcf"/>
<rect x="475.20" y="599.8" width="0.7" height="9.6" fill="#d2d2d2"/>
<text x="476.90" y="605.6" font-size="3.4" fill="#8a8a8a" font-family="Liberation Sans, sans-serif">150</text>
<rect x="494.60" y="599.8" width="0.6" height="2" fill="#cfcfcf"/>
<rect x="514.00" y="599.8" width="0.6" height="2" fill="#cfcfcf"/>
<rect x="533.40" y="599.8" width="0.6" height="2" fill="#cfcfcf"/>
<rect x="552.80" y="599.8" width="0.6" height="2" fill="#cfcfcf"/>
<rect x="572.20" y="599.8" width="0.7" height="9.6" fill="#d2d2d2"/>
<text x="573.90" y="605.6" font-size="3.4" fill="#8a8a8a" font-family="Liberation Sans, sans-serif">200</text>
<rect x="591.60" y="599.8" width="0.6" height="2" fill="#cfcfcf"/>
<rect x="611.00" y="599.8" width="0.6" height="2" fill="#cfcfcf"/>
<rect x="630.40" y="599.8" width="0.6" height="2" fill="#cfcfcf"/>
<rect x="173.2" y="597.90" width="9.3" height="0.7" fill="#d2d2d2"/>
<text transform="translate(179.3,596.60) rotate(-90)" font-size="3.4" fill="#8a8a8a" font-family="Liberation Sans, sans-serif">0 mm</text>
<rect x="180.4" y="578.50" width="2.1" height="0.6" fill="#cfcfcf"/>
<rect x="180.4" y="559.10" width="2.1" height="0.6" fill="#cfcfcf"/>
<rect x="180.4" y="539.70" width="2.1" height="0.6" fill="#cfcfcf"/>
<rect x="180.4" y="520.30" width="2.1" height="0.6" fill="#cfcfcf"/>
<rect x="173.2" y="500.90" width="9.3" height="0.7" fill="#d2d2d2"/>
<text transform="translate(179.3,499.60) rotate(-90)" font-size="3.4" fill="#8a8a8a" font-family="Liberation Sans, sans-serif">50</text>
<rect x="180.4" y="481.50" width="2.1" height="0.6" fill="#cfcfcf"/>
<rect x="180.4" y="462.10" width="2.1" height="0.6" fill="#cfcfcf"/>
<rect x="180.4" y="442.70" width="2.1" height="0.6" fill="#cfcfcf"/>
<rect x="180.4" y="423.30" width="2.1" height="0.6" fill="#cfcfcf"/>
<rect x="173.2" y="403.90" width="9.3" height="0.7" fill="#d2d2d2"/>
<text transform="translate(179.3,402.60) rotate(-90)" font-size="3.4" fill="#8a8a8a" font-family="Liberation Sans, sans-serif">100</text>
<rect x="180.4" y="384.50" width="2.1" height="0.6" fill="#cfcfcf"/>
<rect x="180.4" y="365.10" width="2.1" height="0.6" fill="#cfcfcf"/>
<rect x="180.4" y="345.70" width="2.1" height="0.6" fill="#cfcfcf"/>
<rect x="180.4" y="326.30" width="2.1" height="0.6" fill="#cfcfcf"/>
<rect x="173.2" y="306.90" width="9.3" height="0.7" fill="#d2d2d2"/>
<text transform="translate(179.3,305.60) rotate(-90)" font-size="3.4" fill="#8a8a8a" font-family="Liberation Sans, sans-serif">150</text>
<rect x="180.4" y="287.50" width="2.1" height="0.6" fill="#cfcfcf"/>
<rect x="180.4" y="268.10" width="2.1" height="0.6" fill="#cfcfcf"/>
<g clip-path="url(#vc)">
<path d="M195 254 L195 320" stroke="#447a49" stroke-width="1.7" fill="none" stroke-linecap="round"/>
<path d="M195 522 L195 587" stroke="#447a49" stroke-width="1.5" fill="none" stroke-linecap="round"/>
<path d="M195 587.4 L274.5 587.2" stroke="#447a49" stroke-width="1.4" fill="none" stroke-linecap="round"/>
<path d="M196 587.6 L207 589.6 L207 588" stroke="#447a49" stroke-width="0.9" fill="none"/>
<path d="M255.5 531 L255.5 597.6" stroke="#447a49" stroke-width="1.4" fill="none" stroke-linecap="round"/>
<path d="M243.8 595.8 Q249 597.6 256 597.5 L335 596.4" stroke="#447a49" stroke-width="1.3" fill="none"/>
<path d="M513.6 585.9 L603 585.9" stroke="#447a49" stroke-width="1.3" fill="none" stroke-linecap="round"/>
<path d="M574 595.6 L639 595.6" stroke="#447a49" stroke-width="1.5" fill="none" stroke-linecap="round"/>
<path d="M573.8 260.8 L639 260.6" stroke="#447a49" stroke-width="1.5" fill="none" stroke-linecap="round"/>
<path d="M592.7 254 L592.7 317.7" stroke="#447a49" stroke-width="1.6" fill="none" stroke-linecap="round"/>
<path d="M202.5 255.4 L206.5 255.4" stroke="#6f6f6f" stroke-width="1.0" fill="none" stroke-linecap="round"/>
<path d="M215.8 299.9L231.8 278.8M216.4 305.6L252.2 258.3M214.9 309.1L239.1 341.1M221.3 305.6L256.6 259.0M219.8 309.1L244.5 341.7M226.2 305.6L261.5 259.0M224.7 309.1L249.9 342.3M231.1 305.6L266.4 259.0M239.4 309.1L265.1 343.0M245.8 305.6L256.4 291.6M262.2 283.9L280.6 259.6M221.6 279.1L224.0 282.3M244.3 309.1L269.0 341.7M250.7 305.6L257.0 297.3M266.6 284.5L285.5 259.6M226.5 279.1L246.8 305.9M249.2 309.1L272.9 340.4M255.6 305.6L258.5 301.8M271.5 284.5L289.9 260.2M231.4 279.1L251.7 305.9M254.1 309.1L276.9 339.1M280.8 278.8L294.8 260.2M235.3 277.8L256.6 305.9M258.0 307.8L280.8 337.9M238.3 341.4L262.0 310.1M285.7 278.8L299.7 260.2M242.3 267.6L256.3 286.1M275.6 311.7L296.5 339.1M252.0 342.7L275.2 312.0M280.6 305.0L282.0 303.1M300.4 278.8L314.0 260.9M244.7 264.4L259.3 283.6M278.6 309.1L301.8 339.8M256.4 343.3L286.9 303.1M300.5 285.2L318.4 261.5M246.7 260.6L264.6 284.2M280.6 305.3L306.3 339.1M261.3 343.3L292.3 302.4M296.7 296.7L298.6 294.1M300.0 292.2L323.3 261.5M250.2 258.6L270.0 284.8M284.1 303.4L310.7 338.5M267.2 342.0L323.3 267.9M255.1 258.6L274.9 284.8M288.5 302.7L312.7 334.7M273.5 340.1L322.4 275.6M270.3 259.3L315.8 319.3M289.7 338.2L320.2 297.9M275.2 259.3L316.8 314.2M294.1 338.8L318.3 306.9M280.1 259.3L317.8 309.1M298.5 339.5L316.4 315.8M285.4 259.9L318.8 304.0M303.4 339.5L315.0 324.1M290.3 259.9L319.9 298.9M308.8 338.8L313.2 333.1M305.5 260.6L321.5 281.6M310.9 261.2L322.0 275.9M315.8 261.2L322.6 270.1M321.2 261.8L323.6 265.0" stroke="#30693a" stroke-width="1.75" fill="none" stroke-linecap="round" opacity="1"/>
<path d="M255.9 283.5L256.3 309.0" stroke="#2c6535" stroke-width="1.0" fill="none" stroke-linecap="round" opacity="1"/>
<path d="M303.7 260.6L309.4 268.4M306.9 260.6L312.6 268.4M300.7 260.6L306.4 268.4M300.8 280.1L309.4 268.4M300.7 284.6L312.6 268.4M300.7 276.2L306.4 268.4M301.3 296.3L309.4 307.4M301.2 291.8L312.6 307.4M301.1 300.2L306.4 307.4M301.8 317.8L309.4 307.4M301.6 322.3L312.6 307.4M301.6 313.9L306.4 307.4M302.2 336.6L304.6 339.9M302.1 332.1L307.8 339.9M309.4 268.4L314.6 261.2M312.6 268.4L317.8 261.2M306.4 268.4L311.6 261.2M309.4 268.4L323.6 287.9M312.6 268.4L326.8 287.9M306.4 268.4L320.6 287.9M309.4 307.4L323.6 287.9M312.6 307.4L326.8 287.9M306.4 307.4L320.6 287.9M309.4 307.4L323.6 326.9M312.6 307.4L326.8 326.9M306.4 307.4L320.6 326.9M314.6 339.2L323.6 326.9M317.8 339.2L326.8 326.9M311.6 339.2L320.6 326.9M333.6 262.5L337.9 268.4M339.2 265.8L341.1 268.4M330.1 261.9L334.9 268.4M323.6 287.9L337.9 268.4M326.8 287.9L341.1 268.4M320.6 287.9L334.9 268.4M323.6 287.9L337.9 307.4M326.8 287.9L341.1 307.4M320.6 287.9L334.9 307.4M323.6 326.9L337.9 307.4M326.8 326.9L341.1 307.4M320.6 326.9L334.9 307.4M323.6 326.9L332.6 339.2M326.8 326.9L335.8 339.2M320.6 326.9L329.6 339.2M337.9 268.4L339.3 266.4M334.9 268.4L337.2 265.1M337.9 268.4L352.1 287.9M341.1 268.4L355.3 287.9M334.9 268.4L349.1 287.9M337.9 307.4L352.1 287.9M341.1 307.4L355.3 287.9M334.9 307.4L349.1 287.9M337.9 307.4L352.1 326.9M341.1 307.4L355.3 326.9M334.9 307.4L349.1 326.9M343.1 339.2L352.1 326.9M346.8 338.6L355.3 326.9M340.1 339.2L349.1 326.9M352.1 287.9L359.7 277.5M355.3 287.9L361.9 278.8M349.1 287.9L357.2 276.8M352.1 287.9L366.4 307.4M355.3 287.9L369.6 307.4M349.1 287.9L363.4 307.4M352.1 326.9L366.4 307.4M355.3 326.9L369.6 307.4M349.1 326.9L363.4 307.4M352.1 326.9L360.7 338.6M355.3 326.9L363.9 338.6M349.1 326.9L357.7 338.6M366.4 307.4L379.2 289.8M369.6 307.4L381.4 291.1M363.4 307.4L377.1 288.5M366.4 307.4L380.6 326.9M369.6 307.4L383.8 326.9M363.4 307.4L377.6 326.9M372.1 338.6L380.6 326.9M375.2 338.6L383.8 326.9M369.1 338.6L377.6 326.9M383.9 292.4L394.9 307.4M389.5 295.7L398.1 307.4M378.6 289.2L391.9 307.4M380.6 326.9L394.9 307.4M383.8 326.9L398.1 307.4M377.6 326.9L391.9 307.4M380.6 326.9L388.7 337.9M383.8 326.9L391.9 337.9M377.6 326.9L385.7 337.9M394.9 307.4L399.1 301.5M398.1 307.4L401.4 302.8M391.9 307.4L397.1 300.2M394.9 307.4L409.1 326.9M398.1 307.4L412.3 326.9M391.9 307.4L406.1 326.9M401.0 337.9L409.1 326.9M404.2 337.9L412.3 326.9M398.0 337.9L406.1 326.9M409.1 326.9L416.2 317.1M412.3 326.9L418.0 319.1M406.1 326.9L414.7 315.2M409.1 326.9L417.2 337.9M412.3 326.9L419.9 337.3M406.1 326.9L414.2 337.9M339.0 267.0L331.2 277.9M335.7 267.8L328.6 277.7M332.4 268.6L323.2 281.5M329.1 269.4L322.4 278.8M330.0 268.0L336.5 277.1M326.5 268.0L332.5 276.5M351.0 274.0L344.3 283.3M347.7 274.8L339.1 286.8M344.4 275.6L337.8 284.8M341.1 276.4L332.8 288.0M342.0 275.0L347.2 282.3M338.5 275.0L343.8 282.4M367.0 282.5L358.8 294.0M363.7 283.3L353.7 297.3M360.4 284.1L353.4 293.8M357.1 284.9L349.7 295.2M358.0 283.5L364.8 293.0M354.5 283.5L362.2 294.3M385.0 294.0L376.1 306.5M381.7 294.8L373.6 306.2M378.4 295.6L367.8 310.5M375.1 296.4L368.5 305.7M376.0 295.0L383.5 305.4M372.5 295.0L378.3 303.2M404.0 307.0L397.0 316.9M400.7 307.8L393.8 317.5M397.4 308.6L389.6 319.5M394.1 309.4L384.2 323.3M395.0 308.0L400.5 315.7M391.5 308.0L398.2 317.3M419.0 323.0L409.8 335.8M415.7 323.8L407.7 335.0M412.4 324.6L403.6 336.9M409.1 325.4L402.4 334.8M410.0 324.0L415.2 331.2M406.5 324.0L412.1 331.8M430.0 338.0L420.7 351.1M426.7 338.8L418.4 350.4M423.4 339.6L415.6 350.5M420.1 340.4L411.2 352.9M421.0 339.0L427.3 347.8M417.5 339.0L423.4 347.2" stroke="#2c6535" stroke-width="1.7" fill="none" stroke-linecap="round" opacity="1"/>
<path d="M303.4 260.4L309.1 268.2M306.6 260.4L312.2 268.2M300.4 260.4L306.1 268.2M300.5 279.9L309.1 268.2M300.4 284.4L312.2 268.2M300.4 276.0L306.1 268.2M301.0 296.1L309.1 307.2M300.9 291.6L312.2 307.2M300.8 300.1L306.1 307.2M301.4 317.6L309.1 307.2M301.3 322.1L312.2 307.2M301.3 313.7L306.1 307.2M301.9 336.4L304.3 339.7M301.8 331.9L307.5 339.7M309.1 268.2L314.3 261.1M312.2 268.2L317.5 261.1M306.1 268.2L311.3 261.1M309.1 268.2L323.3 287.7M312.2 268.2L326.5 287.7M306.1 268.2L320.3 287.7M309.1 307.2L323.3 287.7M312.2 307.2L326.5 287.7M306.1 307.2L320.3 287.7M309.1 307.2L323.3 326.7M312.2 307.2L326.5 326.7M306.1 307.2L320.3 326.7M314.3 339.1L323.3 326.7M317.5 339.1L326.5 326.7M311.3 339.1L320.3 326.7M333.3 262.3L337.6 268.2M338.9 265.6L340.8 268.2M329.8 261.7L334.6 268.2M323.3 287.7L337.6 268.2M326.5 287.7L340.8 268.2M320.3 287.7L334.6 268.2M323.3 287.7L337.6 307.2M326.5 287.7L340.8 307.2M320.3 287.7L334.6 307.2M323.3 326.7L337.6 307.2M326.5 326.7L340.8 307.2M320.3 326.7L334.6 307.2M323.3 326.7L332.3 339.1M326.5 326.7L335.5 339.1M320.3 326.7L329.3 339.1M337.6 268.2L339.0 266.2M334.6 268.2L336.9 264.9M337.6 268.2L351.8 287.7M340.8 268.2L355.0 287.7M334.6 268.2L348.8 287.7M337.6 307.2L351.8 287.7M340.8 307.2L355.0 287.7M334.6 307.2L348.8 287.7M337.6 307.2L351.8 326.7M340.8 307.2L355.0 326.7M334.6 307.2L348.8 326.7M342.8 339.1L351.8 326.7M346.4 338.4L355.0 326.7M339.8 339.1L348.8 326.7M351.8 287.7L359.4 277.3M355.0 287.7L361.6 278.6M348.8 287.7L356.9 276.6M351.8 287.7L366.1 307.2M355.0 287.7L369.2 307.2M348.8 287.7L363.1 307.2M351.8 326.7L366.1 307.2M355.0 326.7L369.2 307.2M348.8 326.7L363.1 307.2M351.8 326.7L360.4 338.4M355.0 326.7L363.6 338.4M348.8 326.7L357.4 338.4M366.1 307.2L378.9 289.6M369.2 307.2L381.1 290.9M363.1 307.2L376.8 288.3M366.1 307.2L380.3 326.7M369.2 307.2L383.5 326.7M363.1 307.2L377.3 326.7M371.8 338.4L380.3 326.7M374.9 338.4L383.5 326.7M368.8 338.4L377.3 326.7M383.6 292.2L394.6 307.2M389.2 295.5L397.8 307.2M378.2 289.0L391.6 307.2M380.3 326.7L394.6 307.2M383.5 326.7L397.8 307.2M377.3 326.7L391.6 307.2M380.3 326.7L388.4 337.8M383.5 326.7L391.6 337.8M377.3 326.7L385.4 337.8M394.6 307.2L398.8 301.3M397.8 307.2L401.1 302.6M391.6 307.2L396.8 300.1M394.6 307.2L408.8 326.7M397.8 307.2L412.0 326.7M391.6 307.2L405.8 326.7M400.7 337.8L408.8 326.7M403.9 337.8L412.0 326.7M397.7 337.8L405.8 326.7M408.8 326.7L415.9 316.9M412.0 326.7L417.7 318.9M405.8 326.7L414.4 315.0M408.8 326.7L416.9 337.8M412.0 326.7L419.6 337.1M405.8 326.7L413.9 337.8M338.7 266.8L330.9 277.7M335.4 267.6L328.3 277.5M332.1 268.4L322.9 281.3M328.8 269.2L322.1 278.6M329.7 267.8L336.2 276.9M326.2 267.8L332.2 276.3M350.7 273.8L344.0 283.1M347.4 274.6L338.8 286.6M344.1 275.4L337.5 284.6M340.8 276.2L332.5 287.8M341.7 274.8L346.9 282.1M338.2 274.8L343.5 282.2M366.7 282.3L358.5 293.8M363.4 283.1L353.4 297.1M360.1 283.9L353.1 293.6M356.8 284.7L349.4 295.0M357.7 283.3L364.5 292.8M354.2 283.3L361.9 294.1M384.7 293.8L375.8 306.3M381.4 294.6L373.3 306.0M378.1 295.4L367.5 310.3M374.8 296.2L368.2 305.5M375.7 294.8L383.2 305.2M372.2 294.8L378.0 303.0M403.7 306.8L396.7 316.7M400.4 307.6L393.5 317.3M397.1 308.4L389.3 319.3M393.8 309.2L383.9 323.1M394.7 307.8L400.2 315.5M391.2 307.8L397.9 317.1M418.7 322.8L409.5 335.6M415.4 323.6L407.4 334.8M412.1 324.4L403.3 336.7M408.8 325.2L402.1 334.6M409.7 323.8L414.9 331.0M406.2 323.8L411.8 331.6M429.7 337.8L420.4 350.9M426.4 338.6L418.1 350.2M423.1 339.4L415.3 350.3M419.8 340.2L410.9 352.7M420.7 338.8L427.0 347.6M417.2 338.8L423.1 347.0" stroke="#4a8752" stroke-width="0.6" fill="none" stroke-linecap="round" opacity="1"/>
<path d="M316.8 475.8L322.0 482.9M317.6 472.5L325.2 482.9M310.6 498.5L322.0 482.9M312.9 499.8L325.2 482.9M322.0 482.9L331.0 470.5M325.2 482.9L334.2 470.5M322.0 482.9L334.4 499.8M325.2 482.9L337.6 499.8M341.5 470.5L350.5 482.9M344.7 470.5L353.7 482.9M338.1 499.8L350.5 482.9M341.4 499.8L353.7 482.9M350.5 482.9L359.5 470.5M353.7 482.9L362.7 470.5M350.5 482.9L362.9 499.8M353.7 482.9L366.1 499.8M370.0 470.5L379.0 482.9M373.2 470.5L382.2 482.9M366.6 499.8L379.0 482.9M369.9 499.8L382.2 482.9M379.0 482.9L388.0 470.5M382.2 482.9L391.2 470.5M379.0 482.9L391.4 499.8M382.2 482.9L394.6 499.8M398.5 470.5L407.5 482.9M401.7 470.5L410.7 482.9M395.1 499.8L407.5 482.9M398.4 499.8L410.7 482.9M407.5 482.9L416.5 470.5M410.7 482.9L419.7 470.5M407.5 482.9L419.9 499.8M410.7 482.9L423.1 499.8M427.0 470.5L436.0 482.9M430.2 470.5L439.2 482.9M423.6 499.8L436.0 482.9M426.9 499.8L439.2 482.9M436.0 482.9L445.0 470.5M439.2 482.9L448.2 470.5M436.0 482.9L448.4 499.8M439.2 482.9L451.6 499.8M455.5 470.5L464.5 482.9M458.7 470.5L467.7 482.9M452.1 499.8L464.5 482.9M455.4 499.8L467.7 482.9M464.5 482.9L473.5 470.5M467.7 482.9L476.7 470.5M464.5 482.9L476.9 499.8M467.7 482.9L480.1 499.8M480.6 499.8L484.9 493.9M483.9 499.8L485.3 497.8" stroke="#2c6535" stroke-width="1.6" fill="none" stroke-linecap="round" opacity="1"/>
<path d="M305.6 380.2L309.4 385.4" stroke="#3f7d47" stroke-width="16.3" fill="none" stroke-linecap="round" opacity="1"/>
<path d="M309.4 385.4L323.6 365.9" stroke="#3f7d47" stroke-width="12.4" fill="none" stroke-linecap="round" opacity="1"/>
<path d="M309.4 385.4L323.6 404.9" stroke="#3f7d47" stroke-width="15.0" fill="none" stroke-linecap="round" opacity="1"/>
<path d="M319.3 410.8L323.6 404.9" stroke="#3f7d47" stroke-width="15.5" fill="none" stroke-linecap="round" opacity="1"/>
<path d="M323.6 404.9L337.9 385.4" stroke="#3f7d47" stroke-width="10.6" fill="none" stroke-linecap="round" opacity="1"/>
<path d="M323.6 404.9L337.9 424.4" stroke="#3f7d47" stroke-width="13.3" fill="none" stroke-linecap="round" opacity="1"/>
<path d="M323.6 443.9L337.9 424.4" stroke="#3f7d47" stroke-width="13.9" fill="none" stroke-linecap="round" opacity="1"/>
<path d="M323.6 443.9L337.9 463.4" stroke="#3f7d47" stroke-width="15.7" fill="none" stroke-linecap="round" opacity="1"/>
<path d="M332.6 470.5L337.9 463.4" stroke="#3f7d47" stroke-width="15.6" fill="none" stroke-linecap="round" opacity="1"/>
<path d="M337.9 463.4L352.1 443.9" stroke="#3f7d47" stroke-width="11.3" fill="none" stroke-linecap="round" opacity="1"/>
<path d="M337.9 463.4L345.5 473.8" stroke="#3f7d47" stroke-width="13.5" fill="none" stroke-linecap="round" opacity="1"/>
<path d="M409.1 365.9L423.4 346.4" stroke="#3f7d47" stroke-width="10.6" fill="none" stroke-linecap="round" opacity="1"/>
<path d="M423.4 346.4L437.6 365.9" stroke="#3f7d47" stroke-width="13.7" fill="none" stroke-linecap="round" opacity="1"/>
<path d="M423.4 385.4L437.6 365.9" stroke="#3f7d47" stroke-width="10.3" fill="none" stroke-linecap="round" opacity="1"/>
<path d="M437.6 365.9L444.7 356.1" stroke="#3f7d47" stroke-width="15.2" fill="none" stroke-linecap="round" opacity="1"/>
<path d="M437.6 365.9L451.9 385.4" stroke="#3f7d47" stroke-width="13.8" fill="none" stroke-linecap="round" opacity="1"/>
<path d="M437.6 404.9L451.9 385.4" stroke="#3f7d47" stroke-width="11.3" fill="none" stroke-linecap="round" opacity="1"/>
<path d="M437.6 404.9L451.9 424.4" stroke="#3f7d47" stroke-width="9.9" fill="none" stroke-linecap="round" opacity="1"/>
<path d="M444.2 473.8L451.9 463.4" stroke="#3f7d47" stroke-width="9.5" fill="none" stroke-linecap="round" opacity="1"/>
<path d="M451.9 385.4L458.0 376.9" stroke="#3f7d47" stroke-width="15.5" fill="none" stroke-linecap="round" opacity="1"/>
<path d="M451.9 385.4L466.1 404.9" stroke="#3f7d47" stroke-width="15.2" fill="none" stroke-linecap="round" opacity="1"/>
<path d="M451.9 424.4L466.1 404.9" stroke="#3f7d47" stroke-width="13.9" fill="none" stroke-linecap="round" opacity="1"/>
<path d="M451.9 424.4L466.1 443.9" stroke="#3f7d47" stroke-width="12.8" fill="none" stroke-linecap="round" opacity="1"/>
<path d="M451.9 463.4L466.1 443.9" stroke="#3f7d47" stroke-width="12.4" fill="none" stroke-linecap="round" opacity="1"/>
<path d="M451.9 463.4L459.5 473.8" stroke="#3f7d47" stroke-width="11.6" fill="none" stroke-linecap="round" opacity="1"/>
<path d="M466.1 404.9L468.5 408.1" stroke="#3f7d47" stroke-width="16.6" fill="none" stroke-linecap="round" opacity="1"/>
<path d="M466.1 443.9L473.2 434.1" stroke="#3f7d47" stroke-width="15.6" fill="none" stroke-linecap="round" opacity="1"/>
<path d="M466.1 443.9L474.7 455.6" stroke="#3f7d47" stroke-width="15.7" fill="none" stroke-linecap="round" opacity="1"/>
<path d="M282.8 343.8L287.5 337.3M304.1 339.2L309.4 346.4M302.7 355.5L309.4 346.4M305.6 380.2L309.4 385.4M309.4 346.4L315.1 338.6M309.4 346.4L323.6 365.9M309.4 385.4L323.6 365.9M309.4 385.4L323.6 404.9M319.3 410.8L323.6 404.9M331.7 337.9L337.9 346.4M323.6 365.9L337.9 346.4M323.6 365.9L337.9 385.4M323.6 404.9L337.9 385.4M323.6 404.9L337.9 424.4M323.6 443.9L337.9 424.4M323.6 443.9L337.9 463.4M332.6 470.5L337.9 463.4M337.9 346.4L344.5 337.3M337.9 346.4L352.1 365.9M337.9 385.4L352.1 365.9M337.9 385.4L352.1 404.9M337.9 424.4L352.1 404.9M337.9 424.4L352.1 443.9M337.9 463.4L352.1 443.9M337.9 463.4L345.5 473.8M359.2 336.6L366.4 346.4M352.1 365.9L366.4 346.4M352.1 365.9L366.4 385.4M352.1 404.9L366.4 385.4M352.1 404.9L366.4 424.4M352.1 443.9L366.4 424.4M352.1 443.9L366.4 463.4M358.8 473.8L366.4 463.4M366.4 346.4L374.4 335.3M366.4 346.4L380.6 365.9M366.4 385.4L380.6 365.9M366.4 385.4L380.6 404.9M366.4 424.4L380.6 404.9M366.4 424.4L380.6 443.9M366.4 463.4L380.6 443.9M366.4 463.4L374.0 473.8M386.3 334.7L394.9 346.4M380.6 365.9L394.9 346.4M380.6 365.9L394.9 385.4M380.6 404.9L394.9 385.4M380.6 404.9L394.9 424.4M380.6 443.9L394.9 424.4M380.6 443.9L394.9 463.4M387.2 473.8L394.9 463.4M394.9 346.4L403.9 334.0M394.9 346.4L409.1 365.9M394.9 385.4L409.1 365.9M394.9 385.4L409.1 404.9M394.9 424.4L409.1 404.9M394.9 424.4L409.1 443.9M394.9 463.4L409.1 443.9M394.9 463.4L402.5 473.8M413.9 333.4L423.4 346.4M409.1 365.9L423.4 346.4M409.1 365.9L423.4 385.4M409.1 404.9L423.4 385.4M409.1 404.9L423.4 424.4M409.1 443.9L423.4 424.4M409.1 443.9L423.4 463.4M415.8 473.8L423.4 463.4M423.4 346.4L428.6 339.2M423.4 346.4L437.6 365.9M423.4 385.4L437.6 365.9M423.4 385.4L437.6 404.9M423.4 424.4L437.6 404.9M423.4 424.4L437.6 443.9M423.4 463.4L437.6 443.9M423.4 463.4L431.0 473.8M437.6 365.9L444.7 356.1M437.6 365.9L451.9 385.4M437.6 404.9L451.9 385.4M437.6 404.9L451.9 424.4M437.6 443.9L451.9 424.4M437.6 443.9L451.9 463.4M444.2 473.8L451.9 463.4M451.9 385.4L458.0 376.9M451.9 385.4L466.1 404.9M451.9 424.4L466.1 404.9M451.9 424.4L466.1 443.9M451.9 463.4L466.1 443.9M451.9 463.4L459.5 473.8M466.1 404.9L468.5 408.1M466.1 443.9L473.2 434.1M466.1 443.9L474.7 455.6" stroke="#3f7d47" stroke-width="9.4" fill="none" stroke-linecap="round" opacity="1"/>
<path d="M243.0 339.0L262.0 352.0M252.0 338.0L272.0 354.0M262.0 338.0L283.0 356.0M272.0 339.0L296.0 360.0M283.0 340.0L303.0 362.0M290.0 352.0L300.0 366.0M300.0 345.0L318.0 372.0M262.0 346.0L275.0 343.0M282.0 357.0L300.0 357.0" stroke="#3f7d47" stroke-width="7.6" fill="none" stroke-linecap="round" opacity="1"/>
<ellipse cx="309.4" cy="365.9" rx="6.0" ry="8.0" fill="#3f7d47"/>
<ellipse cx="323.6" cy="424.4" rx="4.5" ry="5.9" fill="#3f7d47"/>
<ellipse cx="337.9" cy="443.9" rx="6.0" ry="8.0" fill="#3f7d47"/>
<ellipse cx="409.1" cy="346.4" rx="6.0" ry="8.0" fill="#3f7d47"/>
<ellipse cx="423.4" cy="365.9" rx="6.0" ry="8.0" fill="#3f7d47"/>
<ellipse cx="437.6" cy="385.4" rx="6.0" ry="8.0" fill="#3f7d47"/>
<ellipse cx="451.9" cy="404.9" rx="9.0" ry="12.0" fill="#3f7d47"/>
<ellipse cx="451.9" cy="443.9" rx="6.0" ry="8.0" fill="#3f7d47"/>
<ellipse cx="466.1" cy="424.4" rx="8.6" ry="11.4" fill="#3f7d47"/>
<ellipse cx="466.1" cy="463.4" rx="9.0" ry="12.0" fill="#3f7d47"/>
<path d="M282.8 339.3L282.8 348.3M287.5 332.8L287.5 341.8M304.1 334.8L304.1 343.8M309.4 341.9L309.4 350.9M302.7 351.0L302.7 360.0M305.6 375.7L305.6 384.7M309.4 380.9L309.4 389.9M315.1 334.1L315.1 343.1M323.6 361.4L323.6 370.4M323.6 400.4L323.6 409.4M319.3 406.2L319.3 415.2M331.7 333.4L331.7 342.4M337.9 341.9L337.9 350.9M337.9 380.9L337.9 389.9M337.9 419.9L337.9 428.9M323.6 439.4L323.6 448.4M337.9 458.9L337.9 467.9M332.6 466.0L332.6 475.0M344.5 332.8L344.5 341.8M352.1 361.4L352.1 370.4M352.1 400.4L352.1 409.4M352.1 439.4L352.1 448.4M345.5 469.3L345.5 478.3M359.2 332.1L359.2 341.1M366.4 341.9L366.4 350.9M366.4 380.9L366.4 389.9M366.4 419.9L366.4 428.9M366.4 458.9L366.4 467.9M358.8 469.3L358.8 478.3M374.4 330.8L374.4 339.8M380.6 361.4L380.6 370.4M380.6 400.4L380.6 409.4M380.6 439.4L380.6 448.4M374.0 469.3L374.0 478.3M386.3 330.2L386.3 339.2M394.9 341.9L394.9 350.9M394.9 380.9L394.9 389.9M394.9 419.9L394.9 428.9M394.9 458.9L394.9 467.9M387.2 469.3L387.2 478.3M403.9 329.5L403.9 338.5M409.1 361.4L409.1 370.4M409.1 400.4L409.1 409.4M409.1 439.4L409.1 448.4M402.5 469.3L402.5 478.3M413.9 328.9L413.9 337.9M423.4 341.9L423.4 350.9M423.4 380.9L423.4 389.9M423.4 419.9L423.4 428.9M423.4 458.9L423.4 467.9M415.8 469.3L415.8 478.3M428.6 334.8L428.6 343.8M437.6 361.4L437.6 370.4M437.6 400.4L437.6 409.4M437.6 439.4L437.6 448.4M431.0 469.3L431.0 478.3M444.7 351.6L444.7 360.6M451.9 380.9L451.9 389.9M451.9 419.9L451.9 428.9M451.9 458.9L451.9 467.9M444.2 469.3L444.2 478.3M458.0 372.4L458.0 381.4M466.1 400.4L466.1 409.4M466.1 439.4L466.1 448.4M459.5 469.3L459.5 478.3M468.5 403.6L468.5 412.6M473.2 429.6L473.2 438.6M474.7 451.1L474.7 460.1" stroke="#3f7d47" stroke-width="6.5" fill="none" stroke-linecap="round" opacity="1"/>
<path d="M306.0 337.9L311.2 345.0M307.4 378.8L311.2 384.0M311.2 345.0L325.5 364.5M311.2 384.0L325.5 403.5M333.6 336.6L339.8 345.0M325.5 364.5L339.8 384.0M325.5 403.5L339.8 423.0M325.5 442.5L339.8 462.0M339.8 345.0L354.0 364.5M339.8 384.0L354.0 403.5M339.8 423.0L354.0 442.5M339.8 462.0L347.4 472.4M361.1 335.2L368.2 345.0M354.0 364.5L368.2 384.0M354.0 403.5L368.2 423.0M354.0 442.5L368.2 462.0M368.2 345.0L382.5 364.5M368.2 384.0L382.5 403.5M368.2 423.0L382.5 442.5M368.2 462.0L375.9 472.4M388.2 333.3L396.8 345.0M382.5 364.5L396.8 384.0M382.5 403.5L396.8 423.0M382.5 442.5L396.8 462.0M396.8 345.0L411.0 364.5M396.8 384.0L411.0 403.5M396.8 423.0L411.0 442.5M396.8 462.0L404.4 472.4M415.8 332.0L425.2 345.0M411.0 364.5L425.2 384.0M411.0 403.5L425.2 423.0M411.0 442.5L425.2 462.0M425.2 345.0L439.5 364.5M425.2 384.0L439.5 403.5M425.2 423.0L439.5 442.5M425.2 462.0L432.9 472.4M439.5 364.5L453.8 384.0M439.5 403.5L453.8 423.0M439.5 442.5L453.8 462.0M453.8 384.0L468.0 403.5M453.8 423.0L468.0 442.5M453.8 462.0L461.4 472.4M468.0 403.5L470.4 406.8M468.0 442.5L476.6 454.2M244.9 337.6L263.9 350.6M253.9 336.6L273.9 352.6M263.9 336.6L284.9 354.6M273.9 337.6L297.9 358.6M284.9 338.6L304.9 360.6M291.9 350.6L301.9 364.6M301.9 343.6L319.9 370.6" stroke="#2c6535" stroke-width="3.6" fill="none" stroke-linecap="round" opacity="0.75"/>
<path d="M301.8 340.9L307.1 348.1M303.2 381.9L307.1 387.1M307.1 348.1L321.3 367.6M307.1 387.1L321.3 406.6M329.4 339.6L335.6 348.1M321.3 367.6L335.6 387.1M321.3 406.6L335.6 426.1M321.3 445.6L335.6 465.1M335.6 348.1L349.8 367.6M335.6 387.1L349.8 406.6M335.6 426.1L349.8 445.6M335.6 465.1L343.2 475.5M356.9 338.3L364.1 348.1M349.8 367.6L364.1 387.1M349.8 406.6L364.1 426.1M349.8 445.6L364.1 465.1M364.1 348.1L378.3 367.6M364.1 387.1L378.3 406.6M364.1 426.1L378.3 445.6M364.1 465.1L371.7 475.5M384.0 336.4L392.6 348.1M378.3 367.6L392.6 387.1M378.3 406.6L392.6 426.1M378.3 445.6L392.6 465.1M392.6 348.1L406.8 367.6M392.6 387.1L406.8 406.6M392.6 426.1L406.8 445.6M392.6 465.1L400.2 475.5M411.6 335.1L421.1 348.1M406.8 367.6L421.1 387.1M406.8 406.6L421.1 426.1M406.8 445.6L421.1 465.1M421.1 348.1L435.3 367.6M421.1 387.1L435.3 406.6M421.1 426.1L435.3 445.6M421.1 465.1L428.7 475.5M435.3 367.6L449.6 387.1M435.3 406.6L449.6 426.1M435.3 445.6L449.6 465.1M449.6 387.1L463.8 406.6M449.6 426.1L463.8 445.6M449.6 465.1L457.2 475.5M463.8 406.6L466.2 409.8M463.8 445.6L472.4 457.3M240.7 340.7L259.7 353.7M249.7 339.7L269.7 355.7M259.7 339.7L280.7 357.7M269.7 340.7L293.7 361.7M280.7 341.7L300.7 363.7M287.7 353.7L297.7 367.7M297.7 346.7L315.7 373.7" stroke="#5b9a63" stroke-width="1.5" fill="none" stroke-linecap="round" opacity="0.8"/>
<path d="M282.1 343.3L286.9 336.8M302.1 355.0L308.8 345.9M308.8 345.9L314.4 338.1M308.8 384.9L323.0 365.4M318.7 410.2L323.0 404.4M323.0 365.4L337.2 345.9M323.0 404.4L337.2 384.9M323.0 443.4L337.2 423.9M332.0 470.0L337.2 462.9M337.2 345.9L343.9 336.8M337.2 384.9L351.5 365.4M337.2 423.9L351.5 404.4M337.2 462.9L351.5 443.4M351.5 365.4L365.8 345.9M351.5 404.4L365.8 384.9M351.5 443.4L365.8 423.9M358.1 473.3L365.8 462.9M365.8 345.9L373.8 334.8M365.8 384.9L380.0 365.4M365.8 423.9L380.0 404.4M365.8 462.9L380.0 443.4M380.0 365.4L394.2 345.9M380.0 404.4L394.2 384.9M380.0 443.4L394.2 423.9M386.6 473.3L394.2 462.9M394.2 345.9L403.3 333.5M394.2 384.9L408.5 365.4M394.2 423.9L408.5 404.4M394.2 462.9L408.5 443.4M408.5 365.4L422.8 345.9M408.5 404.4L422.8 384.9M408.5 443.4L422.8 423.9M415.1 473.3L422.8 462.9M422.8 345.9L428.0 338.8M422.8 384.9L437.0 365.4M422.8 423.9L437.0 404.4M422.8 462.9L437.0 443.4M437.0 365.4L444.1 355.6M437.0 404.4L451.2 384.9M437.0 443.4L451.2 423.9M443.6 473.3L451.2 462.9M451.2 384.9L457.4 376.4M451.2 423.9L465.5 404.4M451.2 462.9L465.5 443.4M465.5 443.4L472.6 433.6" stroke="#5b9a63" stroke-width="2.4" fill="none" stroke-linecap="round" opacity="0.7"/>
<path d="M285.2 345.7L290.0 339.2M305.2 357.4L311.9 348.3M311.9 348.3L317.6 340.5M311.9 387.3L326.1 367.8M321.8 412.6L326.1 406.8M326.1 367.8L340.4 348.3M326.1 406.8L340.4 387.3M326.1 445.8L340.4 426.3M335.1 472.4L340.4 465.3M340.4 348.3L347.0 339.2M340.4 387.3L354.6 367.8M340.4 426.3L354.6 406.8M340.4 465.3L354.6 445.8M354.6 367.8L368.9 348.3M354.6 406.8L368.9 387.3M354.6 445.8L368.9 426.3M361.2 475.7L368.9 465.3M368.9 348.3L376.9 337.2M368.9 387.3L383.1 367.8M368.9 426.3L383.1 406.8M368.9 465.3L383.1 445.8M383.1 367.8L397.4 348.3M383.1 406.8L397.4 387.3M383.1 445.8L397.4 426.3M389.8 475.7L397.4 465.3M397.4 348.3L406.4 335.9M397.4 387.3L411.6 367.8M397.4 426.3L411.6 406.8M397.4 465.3L411.6 445.8M411.6 367.8L425.9 348.3M411.6 406.8L425.9 387.3M411.6 445.8L425.9 426.3M418.2 475.7L425.9 465.3M425.9 348.3L431.1 341.1M425.9 387.3L440.1 367.8M425.9 426.3L440.1 406.8M425.9 465.3L440.1 445.8M440.1 367.8L447.2 358.0M440.1 406.8L454.4 387.3M440.1 445.8L454.4 426.3M446.8 475.7L454.4 465.3M454.4 387.3L460.5 378.8M454.4 426.3L468.6 406.8M454.4 465.3L468.6 445.8M468.6 445.8L475.7 436.0" stroke="#2c6535" stroke-width="2.4" fill="none" stroke-linecap="round" opacity="0.6"/>
<path d="M334 500 L470 500.5 L512 500 L516 535 L512 570.5 L470 573 Q400 575 350 570.5 L334 568.5 Z" fill="#2f6837"/>
<path d="M324 499 L334 500 L334 568.5 L324 567 Z" fill="#2f6837" opacity="0.5"/>
<path d="M305.0 490.6L298.0 517.5M298.0 517.5L308.8 538.8M308.8 538.8L298.0 556.0M298.0 556.0L303.8 566.0M309.4 491.7L302.4 517.5M302.4 517.5L313.1 538.8M313.1 538.8L302.4 556.0M302.4 556.0L308.1 566.5M313.8 492.8L306.8 517.5M306.8 517.5L317.6 538.8M317.6 538.8L306.8 556.0M306.8 556.0L312.6 567.0M318.2 493.9L311.2 517.5M311.2 517.5L321.9 538.8M321.9 538.8L311.2 556.0M311.2 556.0L316.9 567.5M322.6 495.0L315.6 517.5M315.6 517.5L326.4 538.8M326.4 538.8L315.6 556.0M315.6 556.0L321.4 568.0M327.0 496.1L320.0 517.5M320.0 517.5L330.8 538.8M330.8 538.8L320.0 556.0M320.0 556.0L325.8 568.5M331.4 497.2L324.4 517.5M324.4 517.5L335.1 538.8M335.1 538.8L324.4 556.0M324.4 556.0L330.1 569.0M335.8 498.3L328.8 517.5M328.8 517.5L339.6 538.8M339.6 538.8L328.8 556.0M328.8 556.0L334.6 569.5M340.2 499.4L333.2 517.5M333.2 517.5L343.9 538.8M343.9 538.8L333.2 556.0M333.2 556.0L338.9 570.0" stroke="#2c6535" stroke-width="1.8" fill="none" stroke-linecap="round" opacity="1"/>
<path d="M324.1 501.7L326.4 498.5M324.0 508.3L330.1 499.8M324.4 514.1L334.2 500.4M324.3 520.7L338.4 501.1M324.2 527.2L343.0 501.1M324.1 533.7L347.6 501.1M324.0 540.2L352.2 501.1M324.4 546.1L356.8 501.1M324.3 552.6L361.4 501.1M324.2 559.1L366.0 501.1M324.1 565.7L370.6 501.1M324.0 559.8L329.6 567.6M327.8 567.0L375.2 501.1M324.4 553.9L334.2 567.6M331.9 567.6L379.8 501.1M324.3 547.4L339.3 568.3M336.5 567.6L384.4 501.1M324.2 540.9L344.4 568.9M340.6 568.3L389.0 501.1M324.1 534.3L349.0 568.9M344.8 568.9L393.6 501.1M324.0 527.8L354.0 569.6M349.4 568.9L398.2 501.1M324.4 522.0L359.1 570.2M353.5 569.6L402.8 501.1M324.3 515.4L363.7 570.2M358.1 569.6L407.4 501.1M324.2 508.9L368.8 570.9M362.2 570.2L412.0 501.1M324.1 502.4L373.4 570.9M366.8 570.2L416.6 501.1M325.4 497.8L378.4 571.5M371.0 570.9L421.2 501.1M331.4 499.8L383.0 571.5M375.6 570.9L425.8 501.1M337.0 501.1L387.6 571.5M379.7 571.5L430.4 501.1M341.6 501.1L392.7 572.2M384.3 571.5L435.0 501.1M346.2 501.1L397.3 572.2M388.4 572.2L439.6 501.1M350.8 501.1L402.4 572.8M393.0 572.2L444.2 501.1M355.4 501.1L407.0 572.8M397.6 572.2L448.8 501.1M360.0 501.1L411.6 572.8M402.2 572.2L453.4 501.1M364.6 501.1L416.2 572.8M406.4 572.8L458.0 501.1M369.2 501.1L420.8 572.8M411.0 572.8L462.6 501.1M373.8 501.1L425.4 572.8M415.6 572.8L467.2 501.1M378.4 501.1L430.0 572.8M420.2 572.8L471.8 501.1M383.0 501.1L435.1 573.5M424.8 572.8L476.4 501.1M387.6 501.1L439.7 573.5M429.4 572.8L481.0 501.1M392.2 501.1L443.8 572.8M433.5 573.5L485.6 501.1M396.8 501.1L448.4 572.8M438.1 573.5L490.2 501.1M401.4 501.1L453.0 572.8M442.7 573.5L494.8 501.1M406.0 501.1L457.6 572.8M447.8 572.8L499.4 501.1M410.6 501.1L462.2 572.8M452.4 572.8L504.0 501.1M415.2 501.1L466.8 572.8M457.0 572.8L508.6 501.1M419.8 501.1L470.9 572.2M461.6 572.8L513.2 501.1M424.4 501.1L475.5 572.2M466.2 572.8L517.8 501.1M429.0 501.1L480.1 572.2M471.2 572.2L518.1 507.0M433.6 501.1L484.7 572.2M475.8 572.2L519.0 512.2M438.2 501.1L489.3 572.2M480.4 572.2L519.8 517.4M442.8 501.1L493.4 571.5M485.0 572.2L520.2 523.3M447.4 501.1L498.0 571.5M489.6 572.2L521.1 528.5M452.0 501.1L502.6 571.5M494.7 571.5L521.4 534.3M456.6 501.1L507.2 571.5M499.3 571.5L520.9 541.5M461.2 501.1L511.8 571.5M503.9 571.5L520.3 548.7M465.8 501.1L516.4 571.5M508.5 571.5L519.3 556.5M470.4 501.1L517.8 567.0M513.1 571.5L518.3 564.3M475.0 501.1L518.6 561.7M479.6 501.1L519.0 555.9M484.2 501.1L519.8 550.7M488.8 501.1L520.7 545.4M493.4 501.1L521.1 539.6M498.0 501.1L521.9 534.3M502.6 501.1L520.9 526.5M507.2 501.1L519.8 518.7M511.8 501.1L518.8 510.9M516.4 501.1L517.8 503.0" stroke="#3c7a44" stroke-width="1.5" fill="none" stroke-linecap="round" opacity="0.95"/>
<path d="M325.6 501.7L327.9 498.5M325.5 508.3L331.6 499.8M325.9 514.1L335.7 500.4M325.8 520.7L339.9 501.1M325.7 527.2L344.5 501.1M325.6 533.7L349.1 501.1M325.5 540.2L353.7 501.1M325.9 546.1L358.3 501.1M325.8 552.6L362.9 501.1M325.7 559.1L367.5 501.1M325.6 565.7L372.1 501.1M325.5 559.8L331.1 567.6M329.3 567.0L376.7 501.1M325.9 553.9L335.7 567.6M333.4 567.6L381.3 501.1M325.8 547.4L340.8 568.3M338.0 567.6L385.9 501.1M325.7 540.9L345.9 568.9M342.1 568.3L390.5 501.1M325.6 534.3L350.5 568.9M346.3 568.9L395.1 501.1M325.5 527.8L355.5 569.6M350.9 568.9L399.7 501.1M325.9 522.0L360.6 570.2M355.0 569.6L404.3 501.1M325.8 515.4L365.2 570.2M359.6 569.6L408.9 501.1M325.7 508.9L370.3 570.9M363.7 570.2L413.5 501.1M325.6 502.4L374.9 570.9M368.3 570.2L418.1 501.1M326.9 497.8L379.9 571.5M372.5 570.9L422.7 501.1M332.9 499.8L384.5 571.5M377.1 570.9L427.3 501.1M338.5 501.1L389.1 571.5M381.2 571.5L431.9 501.1M343.1 501.1L394.2 572.2M385.8 571.5L436.5 501.1M347.7 501.1L398.8 572.2M389.9 572.2L441.1 501.1M352.3 501.1L403.9 572.8M394.5 572.2L445.7 501.1M356.9 501.1L408.5 572.8M399.1 572.2L450.3 501.1M361.5 501.1L413.1 572.8M403.7 572.2L454.9 501.1M366.1 501.1L417.7 572.8M407.9 572.8L459.5 501.1M370.7 501.1L422.3 572.8M412.5 572.8L464.1 501.1M375.3 501.1L426.9 572.8M417.1 572.8L468.7 501.1M379.9 501.1L431.5 572.8M421.7 572.8L473.3 501.1M384.5 501.1L436.6 573.5M426.3 572.8L477.9 501.1M389.1 501.1L441.2 573.5M430.9 572.8L482.5 501.1M393.7 501.1L445.3 572.8M435.0 573.5L487.1 501.1M398.3 501.1L449.9 572.8M439.6 573.5L491.7 501.1M402.9 501.1L454.5 572.8M444.2 573.5L496.3 501.1M407.5 501.1L459.1 572.8M449.3 572.8L500.9 501.1M412.1 501.1L463.7 572.8M453.9 572.8L505.5 501.1M416.7 501.1L468.3 572.8M458.5 572.8L510.1 501.1M421.3 501.1L472.4 572.2M463.1 572.8L514.7 501.1M425.9 501.1L477.0 572.2M467.7 572.8L519.3 501.1M430.5 501.1L481.6 572.2M472.7 572.2L519.6 507.0M435.1 501.1L486.2 572.2M477.3 572.2L520.5 512.2M439.7 501.1L490.8 572.2M481.9 572.2L521.3 517.4M444.3 501.1L494.9 571.5M486.5 572.2L521.7 523.3M448.9 501.1L499.5 571.5M491.1 572.2L522.6 528.5M453.5 501.1L504.1 571.5M496.2 571.5L522.9 534.3M458.1 501.1L508.7 571.5M500.8 571.5L522.4 541.5M462.7 501.1L513.3 571.5M505.4 571.5L521.8 548.7M467.3 501.1L517.9 571.5M510.0 571.5L520.8 556.5M471.9 501.1L519.3 567.0M514.6 571.5L519.8 564.3M476.5 501.1L520.1 561.7M481.1 501.1L520.5 555.9M485.7 501.1L521.3 550.7M490.3 501.1L522.2 545.4M494.9 501.1L522.6 539.6M499.5 501.1L523.4 534.3M504.1 501.1L522.4 526.5M508.7 501.1L521.3 518.7M513.3 501.1L520.3 510.9M517.9 501.1L519.3 503.0" stroke="#1f4b27" stroke-width="0.5" fill="none" stroke-linecap="round" opacity="0.6"/>
<path d="M514.0 503.0L521.7 492.2M514.0 503.0L521.7 513.8M514.0 510.0L521.3 499.8M514.0 510.0L521.3 520.2M514.0 517.0L519.4 509.5M514.0 517.0L519.4 524.5M514.0 524.0L520.8 514.6M514.0 524.0L520.8 533.4M514.0 531.0L520.6 521.8M514.0 531.0L520.6 540.2M514.0 538.0L522.1 526.7M514.0 538.0L522.1 549.3M514.0 545.0L521.5 534.6M514.0 545.0L521.5 555.4M514.0 552.0L519.6 544.3M514.0 552.0L519.6 559.7M514.0 559.0L522.5 547.1M514.0 559.0L522.5 570.9M514.0 566.0L518.8 559.3M514.0 566.0L518.8 572.7" stroke="#2c6535" stroke-width="1.5" fill="none" stroke-linecap="round" opacity="1"/>
<path d="M318.0 501.0L314.3 495.9M322.2 501.0L327.1 494.2M326.4 501.0L323.7 497.2M330.6 501.0L334.5 495.6M334.8 501.0L332.5 497.8M339.0 501.0L343.6 494.7M343.2 501.0L338.3 494.2M347.4 501.0L351.6 495.1M351.6 501.0L346.3 493.6M355.8 501.0L359.1 496.4M360.0 501.0L355.3 494.5M364.2 501.0L368.5 495.0M368.4 501.0L364.2 495.1M372.6 501.0L376.4 495.7M376.8 501.0L371.6 493.8M381.0 501.0L386.6 493.3M385.2 501.0L381.3 495.6M389.4 501.0L393.9 494.7M393.6 501.0L391.2 497.7M397.8 501.0L402.5 494.5M402.0 501.0L397.5 494.8M406.2 501.0L411.9 493.0M410.4 501.0L405.3 493.9M414.6 501.0L417.8 496.6M418.8 501.0L415.3 496.1M423.0 501.0L427.6 494.7M427.2 501.0L425.0 497.9M431.4 501.0L435.2 495.7M435.6 501.0L432.8 497.2M439.8 501.0L442.4 497.4M444.0 501.0L441.6 497.7M448.2 501.0L453.1 494.2M452.4 501.0L449.8 497.4M456.6 501.0L459.6 496.8M460.8 501.0L457.2 496.0M465.0 501.0L470.3 493.6M469.2 501.0L466.8 497.6M473.4 501.0L477.2 495.8M477.6 501.0L473.5 495.3M481.8 501.0L487.1 493.6M486.0 501.0L480.9 493.9M490.2 501.0L495.5 493.7M494.4 501.0L491.2 496.6M498.6 501.0L502.3 495.9M502.8 501.0L499.4 496.2M507.0 501.0L512.3 493.6M511.2 501.0L505.6 493.2M515.4 501.0L518.1 497.2" stroke="#2c6535" stroke-width="1.4" fill="none" stroke-linecap="round" opacity="1"/>
<path d="M322.0 566.4L320.7 568.3M326.5 566.9L327.9 568.8M331.0 567.3L329.6 569.3M335.5 567.7L337.3 570.2M340.0 568.1L338.1 570.8M344.5 568.5L346.0 570.5M349.0 568.9L347.9 570.4M353.5 569.3L355.2 571.6M358.0 569.7L356.4 571.9M362.5 570.0L364.4 572.6M367.0 570.3L364.5 573.7M371.5 570.7L373.6 573.5M376.0 571.0L374.2 573.5M380.5 571.2L382.5 574.0M385.0 571.5L382.9 574.4M389.5 571.7L390.7 573.4M394.0 572.0L391.6 575.3M398.5 572.2L400.7 575.2M403.0 572.4L400.7 575.6M407.5 572.5L409.7 575.6M412.0 572.6L410.4 574.9M416.5 572.8L418.2 575.1M421.0 572.9L419.8 574.6M425.5 572.9L427.5 575.7M430.0 573.0L428.8 574.6M434.5 573.0L435.7 574.6M439.0 573.0L437.6 574.9M443.5 573.0L444.8 574.8M448.0 572.9L446.4 575.0M452.5 572.7L453.7 574.3M457.0 572.6L455.9 574.1M461.5 572.5L462.8 574.3M466.0 572.4L464.8 574.1M470.5 572.3L472.1 574.5M475.0 572.2L473.9 573.7M479.5 572.0L481.8 575.3M484.0 571.9L482.0 574.7M488.5 571.8L489.8 573.6M493.0 571.7L491.6 573.7M497.5 571.6L499.1 573.8M502.0 571.5L500.4 573.7M506.5 571.3L507.8 573.1M511.0 571.2L508.7 574.4M515.5 571.1L518.0 574.6" stroke="#2c6535" stroke-width="1.2" fill="none" stroke-linecap="round" opacity="1"/>
<path d="M521.0 492.5L523.2 495.9M519.2 508.7L525.2 516.3M519.2 530.4L520.6 532.4M519.5 548.0L524.0 554.6M519.4 568.9L520.8 570.9M532.6 489.9L535.8 494.7M521.1 492.7L539.2 517.3M522.6 490.1L521.2 492.1M522.3 512.5L537.6 536.0M524.4 510.8L519.3 517.2M519.2 530.4L538.6 558.1M520.7 531.5L519.4 533.5M519.3 547.9L540.8 577.9M525.4 546.0L519.4 554.7M519.5 569.1L536.8 592.4M522.6 566.6L519.3 572.2M549.2 489.6L555.6 497.1M523.0 490.1L521.4 491.9M534.7 493.1L550.8 513.8M537.0 490.6L519.2 518.4M532.1 508.2L553.6 533.6M539.9 507.3L519.3 533.4M532.6 528.7L552.7 556.3M539.3 527.7L519.4 554.5M534.0 551.8L551.7 571.5M538.6 548.6L519.2 571.9M535.9 571.1L552.2 591.4M540.9 567.5L526.0 585.3M533.8 588.2L536.5 592.2M536.7 586.7L533.5 592.4M564.0 489.9L567.4 494.5M537.9 489.9L534.4 494.5M550.0 490.1L568.9 516.0M553.6 489.9L532.4 516.8M549.1 511.6L569.1 537.4M552.1 508.4L532.6 537.1M549.7 528.1L566.8 556.8M555.4 526.1L532.2 556.6M548.8 551.1L565.7 572.4M553.5 547.4L535.3 574.6M548.2 566.7L565.8 592.3M554.5 566.7L533.0 592.1M548.9 586.8L552.5 592.2M552.2 588.1L549.3 592.0M576.8 489.8L581.7 497.2M553.5 489.9L551.0 493.1M564.0 489.6L580.4 514.3M567.5 489.8L545.2 517.7M563.6 508.6L581.6 534.5M566.4 510.7L547.9 536.1M563.3 530.1L583.8 554.7M567.5 529.8L548.6 554.5M560.8 547.9L579.3 572.0M566.1 548.5L548.7 574.2M563.3 569.1L579.1 591.9M566.2 570.8L549.1 592.1M563.4 588.8L565.7 592.1M590.9 490.1L596.0 496.3M567.2 489.9L563.4 495.1M578.4 492.3L594.1 512.9M580.1 491.2L562.2 516.6M578.7 511.8L594.6 534.5M583.1 508.2L562.1 537.1M577.2 528.2L597.8 557.4M581.7 529.1L561.0 555.5M578.2 547.0L594.4 573.9M581.7 548.6L564.0 573.7M576.8 568.7L595.3 592.4M578.8 569.3L564.8 591.8M576.9 589.1L579.5 592.2M580.0 587.8L577.4 591.9M605.1 489.6L608.6 494.0M581.1 489.8L575.9 497.1M592.9 492.4L611.2 516.2M596.4 491.0L576.3 517.4M591.8 509.5L609.5 537.2M594.8 510.0L576.5 536.2M589.9 528.0L610.2 556.0M594.9 529.5L579.8 551.3M592.6 550.3L611.1 574.0M596.0 551.6L577.1 571.4M590.8 568.6L607.0 591.8M594.2 571.7L576.9 592.2M591.5 586.8L595.0 592.3M596.4 587.5L593.0 592.2M621.4 489.7L624.6 493.5M596.5 490.1L592.4 497.0M605.3 489.7L624.0 515.3M609.4 490.0L590.5 515.9M604.9 507.4L622.9 534.9M610.4 507.4L589.2 537.6M605.1 530.9L624.0 555.0M609.5 529.0L592.8 555.9M605.8 550.0L623.1 573.8M608.3 549.6L590.0 578.1M607.5 569.1L622.7 591.9M610.0 570.4L592.6 592.5M610.1 587.2L606.9 592.0M609.7 490.0L605.7 495.0M622.4 490.4L624.6 493.8M624.4 491.2L603.3 516.7M619.4 509.5L625.0 516.3M623.9 512.2L604.4 536.4M619.0 529.3L624.9 537.2M623.7 528.7L605.3 554.0M620.6 550.6L624.6 555.9M622.5 549.2L608.0 573.3M618.8 568.5L624.5 575.4M622.2 571.8L606.7 592.3M621.2 589.7L623.1 592.4M625.0 585.2L620.5 591.9M624.8 490.3L620.8 496.4M624.7 510.7L622.0 514.8M624.8 527.0L620.6 533.0M624.5 547.4L618.2 554.9M624.8 568.3L619.5 575.5M624.7 586.6L621.0 590.9" stroke="#2d6536" stroke-width="1.85" fill="none" stroke-linecap="round" opacity="1"/>
<path d="M520.4 494.3L536.6 516.3M524.9 511.5L540.2 535.0M527.0 509.8L519.4 519.3M519.4 533.3L536.0 557.1M523.3 530.5L519.3 536.5M522.2 546.2L544.2 576.9M520.1 565.5L539.4 591.4M525.2 565.6L519.0 576.1M528.8 583.8L527.0 586.5M525.9 489.7L523.2 492.8M538.1 492.1L554.2 512.8M539.6 489.6L521.8 517.4M529.5 507.2L551.0 532.6M542.5 506.3L521.4 533.0M530.0 527.7L550.1 555.3M542.7 526.7L521.9 554.8M541.2 547.6L520.2 572.7M533.3 570.1L549.6 590.4M543.5 566.5L527.1 586.1M536.4 587.2L539.5 591.9M540.1 585.7L536.5 592.1M550.5 489.5L529.8 515.8M546.2 550.1L563.1 571.4M556.1 546.4L537.9 573.6M550.8 565.7L568.9 592.0M557.9 565.7L535.9 591.7M555.6 587.1L551.7 592.3M550.4 489.6L548.4 492.1M569.1 490.0L547.8 516.7M569.0 509.7L550.5 535.1M570.1 528.8L551.2 553.5M560.8 587.8L564.0 592.5M580.6 527.2L601.2 556.4M579.1 528.1L558.4 554.5M582.2 568.3L567.4 592.2M582.6 586.8L579.1 592.3M603.5 489.9L606.0 493.0M577.6 490.1L573.3 496.1M596.3 491.4L614.6 515.2M596.8 570.7L578.4 592.4M588.9 585.8L592.8 592.0M602.5 529.9L621.4 554.0M612.1 528.0L595.4 554.9M613.4 569.4L595.5 592.1M621.8 490.2L600.7 515.7" stroke="#2d6536" stroke-width="1.4" fill="none" stroke-linecap="round" opacity="1"/>
<path d="M373.6 354.6 L373.6 359.4 L374.8 358.4 L375.8 360.2 L376.5 359.8 L375.6 358.1 L377 358 Z" fill="#fff" stroke="#e8e8e8" stroke-width="0.2"/>
</g>
<g>
<rect x="585.5" y="279.3" width="5" height="27" fill="#dcdcdc"/>
<rect x="590" y="279.3" width="26.8" height="27" fill="#a9a9a9" stroke="#8c8c8c" stroke-width="0.5"/>
<rect x="590.3000000000001" y="279.6" width="3.8" height="3.8" fill="#8d8f9b"/>
<rect x="612.7" y="279.6" width="3.8" height="3.8" fill="#8d8f9b"/>
<rect x="590.3000000000001" y="302.1" width="3.8" height="3.8" fill="#8d8f9b"/>
<rect x="612.7" y="302.1" width="3.8" height="3.8" fill="#8d8f9b"/>
<text x="603.6" y="295.4" font-size="5.6" text-anchor="middle" fill="#1f2a44" font-family="Liberation Sans, sans-serif">BACK</text>
<text x="588" y="294.8" font-size="3.5" text-anchor="middle" fill="#7a7a7a" font-family="Liberation Sans, sans-serif">T</text>
<path d="M612.3 274 V279.3" stroke="#2a5fa8" stroke-width="0.9"/>
<text x="612.2" y="271.8" font-size="5.6" text-anchor="middle" fill="#3a6db5" font-family="Liberation Sans, sans-serif">Z</text>
<path d="M581 306.7 H587.5" stroke="#b02a2a" stroke-width="1.4"/>
<text x="576.4" y="308.6" font-size="5.6" text-anchor="middle" fill="#c0393b" font-family="Liberation Sans, sans-serif">X</text>
<path d="M587.5 306.4 H617.5" stroke="#3a7a44" stroke-width="0.8"/>
<text x="619.6" y="309" font-size="5.6" text-anchor="middle" fill="#3f8a49" font-family="Liberation Sans, sans-serif">Y</text>
</g>
</svg>
<div class="r" style="left:167.3px;top:611.2px;width:476px;height:13.4px;background:#f0f0f0;"></div>
<div class="t" style="left:171.3px;top:615px;font-size:7.3px;line-height:7.3px;color:#222;font-weight:normal;transform-origin:0 50%;transform:scaleX(0.856);">450x420x400</div>
<div class="t" style="left:225px;top:615px;font-size:7.3px;line-height:7.3px;color:#222;font-weight:normal;transform-origin:0 50%;transform:scaleX(0.906);">Rotate/Move</div>
<div class="t" style="left:312px;top:615px;font-size:7.3px;line-height:7.3px;color:#222;font-weight:normal;transform-origin:0 50%;transform:scaleX(0.913);">Move and rotate the view of the component with the mouse</div>
<div class="r" style="left:517px;top:613.8px;width:118px;height:6.4px;background:#e6e6e6;border:0.7px solid #bcbcbc;box-sizing:border-box"></div>
<div class="rp"><div class="r" style="left:638.8px;top:254.6px;width:161.2px;height:370px;background:#f0f0f0;"></div>
<div class="r" style="left:638.8px;top:254.6px;width:4.6px;height:370px;background:#f5f5f5;"></div>
<div class="r" style="left:643.6px;top:260.5px;width:160px;height:64px;background:transparent;border:0.8px solid #e7e7e7;box-sizing:border-box"></div>
<div class="r" style="left:641px;top:332px;width:162px;height:292.6px;background:#f1f1f1;border:0.8px solid #e9e9e9;box-sizing:border-box"></div>
<div class="r" style="left:645.5px;top:339.5px;width:158px;height:36px;background:transparent;border:0.8px solid #e7e7e7;box-sizing:border-box"></div>
<div class="r" style="left:645.5px;top:379px;width:158px;height:32px;background:transparent;border:0.8px solid #e7e7e7;box-sizing:border-box"></div>
<div class="t" style="left:647px;top:259px;font-size:4.9px;line-height:4.9px;color:#222;font-weight:normal;background:#f0f0f0;padding:0 1px;margin-left:-1px">Clip Planes</div>
<div class="t" style="left:647px;top:271px;font-size:4.9px;line-height:4.9px;color:#666;font-weight:normal;">X:</div>
<div class="r" style="left:655.5px;top:269.9px;width:9.5px;height:4.8px;background:#fafafa;border:0.6px solid #8a8a8a;box-sizing:border-box"></div>
<svg class="r" style="left:669.5px;top:269.7px" width="4" height="5" viewBox="0 0 4 5"><path d="M3.2 0.5 L0.8 2.5 L3.2 4.5" fill="none" stroke="#333" stroke-width="0.8"/></svg>
<div class="r" style="left:677px;top:267.5px;width:9px;height:9.4px;background:#cdcdcd;"></div>
<svg class="r" style="left:776.5px;top:269.7px" width="4" height="5" viewBox="0 0 4 5"><path d="M0.8 0.5 L3.2 2.5 L0.8 4.5" fill="none" stroke="#333" stroke-width="0.8"/></svg>
<div class="r" style="left:784.5px;top:267.8px;width:20px;height:9px;background:#fff;border:0.7px solid #9a9a9a;box-sizing:border-box"></div>
<div class="t" style="left:799.4px;top:271px;font-size:4.9px;line-height:4.9px;color:#222;font-weight:normal;transform-origin:100% 50%;transform:translateX(-100%);">0</div>
<div class="t" style="left:647px;top:285px;font-size:4.9px;line-height:4.9px;color:#666;font-weight:normal;">Y:</div>
<div class="r" style="left:655.5px;top:284.0px;width:9.5px;height:4.8px;background:#fafafa;border:0.6px solid #8a8a8a;box-sizing:border-box"></div>
<svg class="r" style="left:669.5px;top:283.8px" width="4" height="5" viewBox="0 0 4 5"><path d="M3.2 0.5 L0.8 2.5 L3.2 4.5" fill="none" stroke="#333" stroke-width="0.8"/></svg>
<div class="r" style="left:738px;top:281.6px;width:9px;height:9.4px;background:#cdcdcd;"></div>
<svg class="r" style="left:776.5px;top:283.8px" width="4" height="5" viewBox="0 0 4 5"><path d="M0.8 0.5 L3.2 2.5 L0.8 4.5" fill="none" stroke="#333" stroke-width="0.8"/></svg>
<div class="r" style="left:784.5px;top:281.90000000000003px;width:20px;height:9px;background:#fff;border:0.7px solid #9a9a9a;box-sizing:border-box"></div>
<div class="t" style="left:799.4px;top:285px;font-size:4.9px;line-height:4.9px;color:#222;font-weight:normal;transform-origin:100% 50%;transform:translateX(-100%);">204</div>
<div class="t" style="left:647px;top:299px;font-size:4.9px;line-height:4.9px;color:#666;font-weight:normal;">Z:</div>
<div class="r" style="left:655.5px;top:297.8px;width:9.5px;height:4.8px;background:#fafafa;border:0.6px solid #8a8a8a;box-sizing:border-box"></div>
<svg class="r" style="left:669.5px;top:297.6px" width="4" height="5" viewBox="0 0 4 5"><path d="M3.2 0.5 L0.8 2.5 L3.2 4.5" fill="none" stroke="#333" stroke-width="0.8"/></svg>
<div class="r" style="left:677px;top:295.40000000000003px;width:9px;height:9.4px;background:#cdcdcd;"></div>
<svg class="r" style="left:776.5px;top:297.6px" width="4" height="5" viewBox="0 0 4 5"><path d="M0.8 0.5 L3.2 2.5 L0.8 4.5" fill="none" stroke="#333" stroke-width="0.8"/></svg>
<div class="r" style="left:784.5px;top:295.70000000000005px;width:20px;height:9px;background:#fff;border:0.7px solid #9a9a9a;box-sizing:border-box"></div>
<div class="t" style="left:799.4px;top:299px;font-size:4.9px;line-height:4.9px;color:#222;font-weight:normal;transform-origin:100% 50%;transform:translateX(-100%);">0</div>
<div class="r" style="left:646.2px;top:310px;width:7.2px;height:7.4px;background:#fff;border:0.7px solid #777;box-sizing:border-box"></div>
<div class="t" style="left:654.6px;top:312px;font-size:4.9px;line-height:4.9px;color:#222;font-weight:normal;">Transparent Cuts</div>
<div class="r" style="left:723px;top:330.2px;width:15px;height:0.8px;background:transparent;border-top:0.8px dotted #b5b5b5"></div>
<div class="t" style="left:650px;top:338px;font-size:4.9px;line-height:4.9px;color:#222;font-weight:normal;background:#f1f1f1;padding:0 1px;margin-left:-1px">Lattice properties</div>
<div class="t" style="left:649px;top:350px;font-size:4.9px;line-height:4.9px;color:#222;font-weight:normal;">Name:</div>
<div class="t" style="left:696.7px;top:350px;font-size:4.9px;line-height:4.9px;color:#222;font-weight:normal;">BRACKET&nbsp; (repaired) (color) (repaired) Lattice Graph</div>
<div class="t" style="left:649px;top:362px;font-size:4.9px;line-height:4.9px;color:#222;font-weight:normal;">Statistics:</div>
<div class="t" style="left:696.7px;top:362px;font-size:4.9px;line-height:4.9px;color:#222;font-weight:normal;">1719 junctions 2212 beams</div>
<div class="t" style="left:650px;top:377px;font-size:4.9px;line-height:4.9px;color:#222;font-weight:normal;background:#f1f1f1;padding:0 1px;margin-left:-1px">Part generation</div>
<svg class="r" style="left:648.5px;top:384px" width="8" height="8" viewBox="0 0 8 8"><path d="M1 3 L4 2 L6.6 2.6 L6.4 5.6 L3.4 6.6 L0.8 5.8 Z" fill="#8e86c4"/><path d="M2 1.6 L5 0.8 L7.2 1.6 L7 4 L4.2 4.6 L2 4 Z" fill="#a9a2d6" opacity="0.9"/></svg>
<svg class="r" style="left:657.2px;top:383.5px" width="8" height="8" viewBox="0 0 8 8"><circle cx="4" cy="4" r="3.3" fill="#fff" stroke="#333" stroke-width="0.7"/><circle cx="4" cy="4" r="1.8" fill="#222"/></svg>
<div class="t" style="left:666px;top:386px;font-size:4.9px;line-height:4.9px;color:#222;font-weight:normal;">Solid - Use for part generation</div>
<svg class="r" style="left:648.5px;top:397px" width="8" height="8" viewBox="0 0 8 8"><rect x="1" y="1.2" width="5.6" height="5.6" fill="none" stroke="#666" stroke-width="0.7" stroke-dasharray="1.2 1"/></svg>
<svg class="r" style="left:657.2px;top:396.5px" width="8" height="8" viewBox="0 0 8 8"><circle cx="4" cy="4" r="3.3" fill="#fff" stroke="#333" stroke-width="0.7"/></svg>
<div class="t" style="left:666px;top:399px;font-size:4.9px;line-height:4.9px;color:#222;font-weight:normal;">Ignore - Do not use for part generation</div>
<div class="t" style="left:649px;top:415px;font-size:4.9px;line-height:4.9px;color:#222;font-weight:normal;">Smoothing (legacy):</div>
<div class="r" style="left:773px;top:412px;width:30px;height:8.8px;background:#e1e1e1;border:0.7px solid #adadad;box-sizing:border-box"></div>
<div class="t" style="left:775px;top:415px;font-size:4.9px;line-height:4.9px;color:#222;font-weight:normal;">Coarse</div>
<div class="t" style="left:649px;top:428px;font-size:4.9px;line-height:4.9px;color:#222;font-weight:normal;">Beam side count (legacy):</div>
<div class="r" style="left:773px;top:425.6px;width:30px;height:9px;background:#fff;border:0.7px solid #7a7a7a;box-sizing:border-box"></div></div>
</div></body></html>
